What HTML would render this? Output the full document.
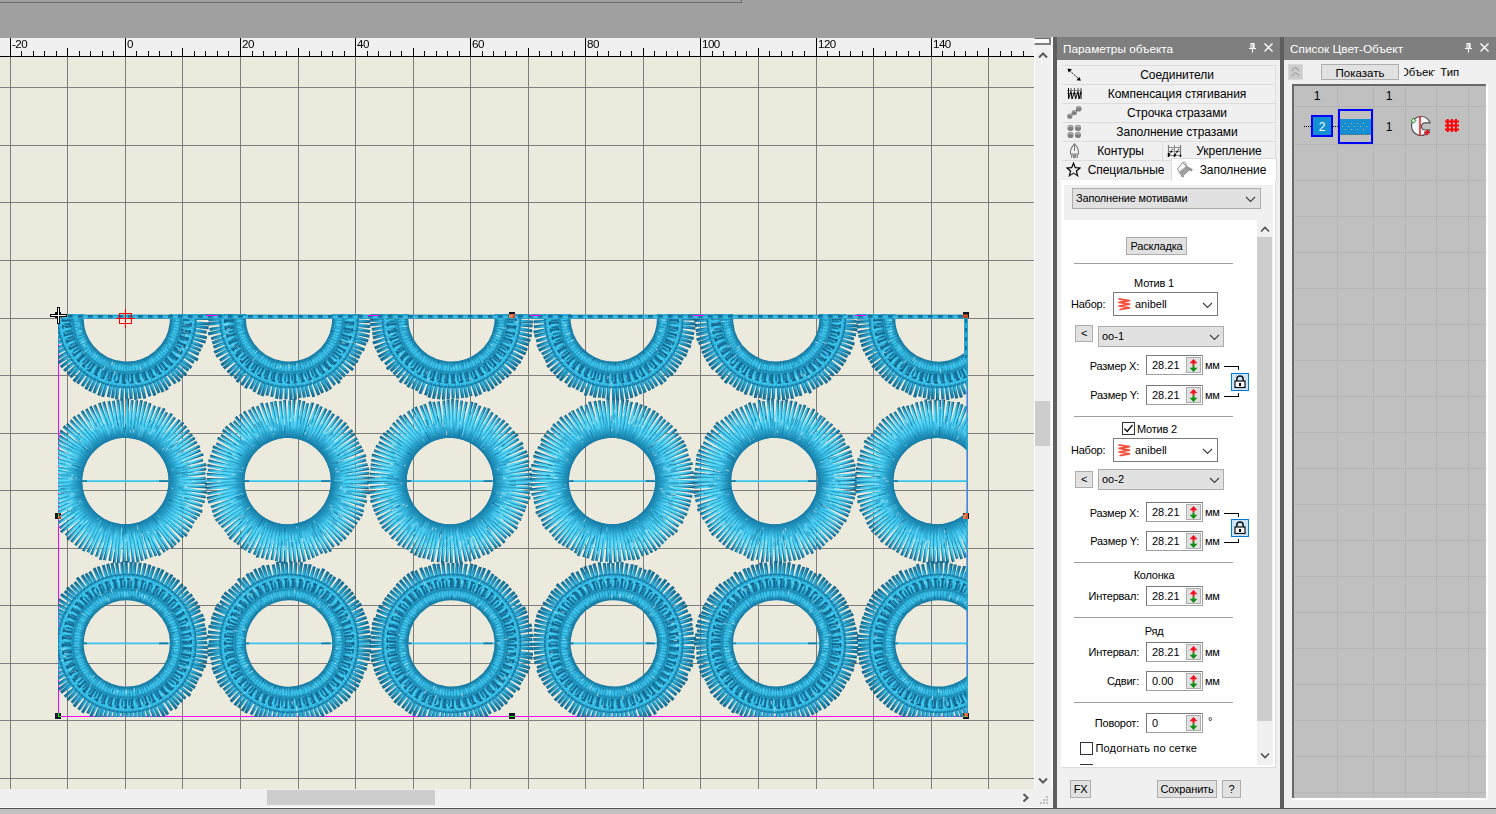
<!DOCTYPE html>
<html lang="ru"><head><meta charset="utf-8"><title>Параметры объекта</title>
<style>
*{box-sizing:border-box;margin:0;padding:0}
html,body{width:1496px;height:814px;overflow:hidden}
body{background:#a0a0a0;font-family:"Liberation Sans",sans-serif;font-size:12px;color:#000;position:relative}
.abs{position:absolute}
.t{position:absolute;white-space:nowrap;line-height:14px}
.btn{position:absolute;background:#e1e1e1;border:1px solid #adadad;text-align:center;white-space:nowrap}

.hdr{position:absolute;top:37px;height:23px;background:#7f7f7f;color:#fff;font-size:11.8px;line-height:25px;white-space:nowrap}
.tab{position:absolute;height:19px;border-top:1px solid #dcdcdc;font-size:12px;letter-spacing:-0.05px;line-height:18px;text-align:center;white-space:nowrap;color:#000}
.s{font-size:11px;letter-spacing:-0.18px}
.lbl{position:absolute;letter-spacing:-0.22px;font-size:11px;line-height:13px;white-space:nowrap;text-align:right}
.spin{position:absolute;left:1146px;width:57px;height:20px;background:#fff;border:1px solid #7a7a7a;border-right-color:#a0a0a0;border-bottom-color:#a0a0a0;font-size:11px;line-height:18px;padding-left:5px}
.spin i{position:absolute;right:1px;top:1px;width:15px;height:16px;background:#e1e1e1;border:1px solid #adadad}
.sep{position:absolute;left:1074px;width:159px;height:1px;background:#a0a0a0}
.cmbw{position:absolute;left:1113px;width:105px;height:24px;background:#fff;border:1px solid #7a7a7a;font-size:11px;line-height:22px}
.cmbg{position:absolute;left:1098px;width:126px;height:21px;background:#e1e1e1;border:1px solid #adadad;font-size:11px;line-height:19px;padding-left:3px}
.cb{position:absolute;width:13px;height:13px;background:#fff;border:1px solid #333}
.lock{position:absolute;left:1231px;width:18px;height:18px;background:#cce4f7;border:1px solid #0078d7}
/*CSS*/
</style></head><body>
<div class="abs" style="left:0;top:0;width:742px;height:3px;border-right:1px solid #6d6d6d;border-bottom:1px solid #6d6d6d;background:#a0a0a0"></div>
<svg id="cv" width="1034" height="751" viewBox="0 38 1034 751" style="position:absolute;left:0;top:38px" shape-rendering="crispEdges">
<rect x="0" y="38" width="1034" height="19" fill="#f0f0f0"/>
<rect x="0" y="57" width="1034" height="732" fill="#ece9dd"/>
<path d="M10.5 57V789M67.5 57V789M125.5 57V789M182.5 57V789M240.5 57V789M298.5 57V789M355.5 57V789M413.5 57V789M470.5 57V789M528.5 57V789M585.5 57V789M643.5 57V789M700.5 57V789M758.5 57V789M816.5 57V789M873.5 57V789M931.5 57V789M988.5 57V789M0 87.5H1034M0 145.5H1034M0 202.5H1034M0 260.5H1034M0 318.5H1034M0 375.5H1034M0 433.5H1034M0 490.5H1034M0 548.5H1034M0 605.5H1034M0 663.5H1034M0 720.5H1034M0 778.5H1034" stroke="#7d7d7d" stroke-width="1" fill="none"/>
<path d="M10.5 38V57M21.5 51V57M33.5 51V57M44.5 51V57M56.5 51V57M67.5 48V57M79.5 51V57M90.5 51V57M102.5 51V57M113.5 51V57M125.5 38V57M136.5 51V57M148.5 51V57M159.5 51V57M171.5 51V57M182.5 48V57M194.5 51V57M205.5 51V57M217.5 51V57M228.5 51V57M240.5 38V57M252.5 51V57M263.5 51V57M275.5 51V57M286.5 51V57M298.5 48V57M309.5 51V57M321.5 51V57M332.5 51V57M344.5 51V57M355.5 38V57M367.5 51V57M378.5 51V57M390.5 51V57M401.5 51V57M413.5 48V57M424.5 51V57M436.5 51V57M447.5 51V57M459.5 51V57M470.5 38V57M482.5 51V57M493.5 51V57M505.5 51V57M516.5 51V57M528.5 48V57M539.5 51V57M551.5 51V57M562.5 51V57M574.5 51V57M585.5 38V57M597.5 51V57M608.5 51V57M620.5 51V57M631.5 51V57M643.5 48V57M654.5 51V57M666.5 51V57M677.5 51V57M689.5 51V57M700.5 38V57M712.5 51V57M723.5 51V57M735.5 51V57M746.5 51V57M758.5 48V57M769.5 51V57M781.5 51V57M792.5 51V57M804.5 51V57M816.5 38V57M827.5 51V57M839.5 51V57M850.5 51V57M862.5 51V57M873.5 48V57M885.5 51V57M896.5 51V57M908.5 51V57M919.5 51V57M931.5 38V57M942.5 51V57M954.5 51V57M965.5 51V57M977.5 51V57M988.5 48V57M1000.5 51V57M1011.5 51V57M1023.5 51V57M0 56.5H1034" stroke="#000" stroke-width="1" fill="none"/>
<g shape-rendering="auto" font-family="'Liberation Sans',sans-serif" font-size="11.6" fill="#000">
<text x="12" y="48.4" letter-spacing="-0.55">-20</text>
<text x="127" y="48.4" letter-spacing="-0.55">0</text>
<text x="242" y="48.4" letter-spacing="-0.55">20</text>
<text x="357" y="48.4" letter-spacing="-0.55">40</text>
<text x="472" y="48.4" letter-spacing="-0.55">60</text>
<text x="587" y="48.4" letter-spacing="-0.55">80</text>
<text x="702" y="48.4" letter-spacing="-0.55">100</text>
<text x="818" y="48.4" letter-spacing="-0.55">120</text>
<text x="933" y="48.4" letter-spacing="-0.55">140</text>
</g>
<g shape-rendering="auto">
<defs>
<clipPath id="dc"><rect x="58" y="314" width="910" height="403"/></clipPath>
<radialGradient id="g1" gradientUnits="userSpaceOnUse" cx="0" cy="0" r="83"><stop offset="0.518" stop-color="#167aa4"/><stop offset="0.566" stop-color="#2092bc"/><stop offset="0.614" stop-color="#2aa6d0"/><stop offset="0.663" stop-color="#36bce6"/><stop offset="0.723" stop-color="#40cdf5"/><stop offset="0.819" stop-color="#42d0f7"/><stop offset="0.904" stop-color="#34b6e0"/><stop offset="0.964" stop-color="#2494bc"/><stop offset="1.000" stop-color="#18769c"/></radialGradient>
<radialGradient id="g1d" gradientUnits="userSpaceOnUse" cx="0" cy="0" r="83"><stop offset="0.675" stop-color="rgba(10,80,115,0)"/><stop offset="0.747" stop-color="rgba(10,80,115,0.4)"/><stop offset="0.892" stop-color="rgba(8,65,100,0.55)"/><stop offset="1.000" stop-color="rgba(5,50,80,0.75)"/></radialGradient>
<radialGradient id="g1l" gradientUnits="userSpaceOnUse" cx="0" cy="0" r="83"><stop offset="0.602" stop-color="rgba(120,235,255,0)"/><stop offset="0.699" stop-color="rgba(120,235,255,0.45)"/><stop offset="0.843" stop-color="rgba(120,235,255,0.5)"/><stop offset="0.940" stop-color="rgba(120,235,255,0)"/></radialGradient>
<radialGradient id="g2o" gradientUnits="userSpaceOnUse" cx="0" cy="0" r="83"><stop offset="0.819" stop-color="#2eaed8"/><stop offset="0.861" stop-color="#32b4de"/><stop offset="0.904" stop-color="#2698c0"/><stop offset="0.952" stop-color="#1a7ea6"/><stop offset="1.000" stop-color="#11648a"/></radialGradient>
<radialGradient id="g2m" gradientUnits="userSpaceOnUse" cx="0" cy="0" r="83"><stop offset="0.657" stop-color="#2090ba"/><stop offset="0.687" stop-color="#34bce8"/><stop offset="0.747" stop-color="#40cef6"/><stop offset="0.795" stop-color="#3ac6f0"/><stop offset="0.837" stop-color="#2498c2"/></radialGradient>
<radialGradient id="g2i" gradientUnits="userSpaceOnUse" cx="0" cy="0" r="83"><stop offset="0.518" stop-color="#15769e"/><stop offset="0.548" stop-color="#2296be"/><stop offset="0.584" stop-color="#3ac6f0"/><stop offset="0.620" stop-color="#38c2ec"/><stop offset="0.647" stop-color="#26a0c8"/></radialGradient>
<g id="m1" fill="none" stroke-linecap="butt"><circle r="51.5" stroke="url(#g1)" stroke-width="16.6"/><path d="M43.2 1.4L59 1.8L72 1.5L81.6 1.2L81.6 -1.3L72 -1.5L59 -1.8L43.2 -1.4ZM43 4.1L58.8 5.5L71.8 6L81.2 6.4L81.3 3.9L72 3.1L59 1.9L43.2 1.3ZM42.7 6.4L58.4 8.6L71.3 9.9L81 10.8L81.3 8.2L71.7 6.9L58.8 5.1L43.1 3.6ZM42.3 8.7L57.8 11.8L70.7 13.7L80.1 15.1L80.6 12.6L71.2 10.8L58.4 8.3L42.8 6ZM41.7 11.4L57 15.4L69.7 18.2L79.6 20.3L80.2 17.8L70.4 15.3L57.8 11.9L42.3 8.7ZM41.1 13.5L56.1 18.4L68.7 21.8L77.4 24.1L78.1 21.6L69.5 18.9L57.1 14.9L41.8 10.8ZM40.2 15.9L54.9 21.6L67.3 25.7L77 28.9L77.8 26.5L68.3 22.9L56.1 18.2L41.1 13.3ZM39.1 18.5L53.4 25.1L65.4 30L73.2 33.2L74.3 30.8L66.6 27.3L54.8 21.8L40.2 15.9ZM37.9 20.9L51.8 28.4L63.5 34L73 38.6L74.2 36.4L64.8 31.3L53.4 25.2L39.1 18.4ZM36.7 22.9L50.1 31.2L61.5 37.4L70.1 42.1L71.4 39.9L63 34.8L51.9 28L38.1 20.5ZM35.4 24.8L48.4 33.7L59.5 40.6L66.6 44.9L68 42.8L61.1 38.1L50.4 30.7L37 22.4ZM33.8 26.9L46.2 36.7L56.8 44.2L63.7 49.1L65.3 47L58.6 41.8L48.4 33.8L35.5 24.7ZM32.3 28.7L44.2 39.1L54.4 47.2L61.3 52.7L63 50.8L56.3 44.9L46.5 36.4L34.1 26.6ZM30.6 30.5L41.9 41.6L51.6 50.2L58.7 56.5L60.4 54.6L53.7 48L44.4 38.9L32.5 28.4ZM28.7 32.4L39.2 44.1L48.4 53.4L55.6 60.7L57.5 58.9L50.5 51.3L41.8 41.6L30.7 30.4ZM26.7 34L36.5 46.4L45.1 56.1L51.6 63.5L53.6 61.9L47.4 54.2L39.3 44L28.8 32.2ZM24.7 35.5L33.8 48.4L41.8 58.6L47.9 66.4L49.9 64.9L44.2 56.9L36.7 46.3L26.9 33.8ZM22.6 36.9L30.9 50.3L38.3 61L43.5 68.3L45.6 66.9L40.8 59.3L33.9 48.3L24.9 35.3ZM20.2 38.2L27.6 52.2L34.3 63.3L39.8 72.5L42 71.2L36.9 61.8L30.8 50.4L22.6 36.8ZM18 39.3L24.7 53.6L30.7 65.1L35.3 74L37.6 72.8L33.4 63.8L27.9 52L20.5 38.1ZM15.9 40.2L21.8 54.8L27.3 66.6L31 74.7L33.4 73.7L30 65.5L25.1 53.4L18.5 39.1ZM13.6 41L18.6 56L23.4 68.1L26.5 76L28.9 75.1L26.2 67.1L22 54.8L16.2 40.1ZM10.9 41.8L15 57.1L19 69.5L21.8 78.3L24.3 77.6L21.9 68.6L18.5 56.1L13.6 41ZM8.4 42.4L11.6 57.9L14.9 70.5L17.2 79.4L19.6 78.8L17.8 69.8L15.1 57.1L11.2 41.8ZM5.9 42.8L8.2 58.5L10.6 71.2L12.6 81.4L15.1 80.9L13.6 70.7L11.7 57.9L8.6 42.3ZM3.9 43L5.4 58.8L7.3 71.6L8.6 80.4L11.1 80L10.3 71.3L9 58.3L6.7 42.7ZM0.9 43.2L1.3 59L2.3 72L3.1 81.4L5.6 81.2L5.3 71.8L4.9 58.8L3.7 43.1ZM-1.6 43.2L-2.1 59L-1.9 72L-1.7 81.2L0.8 81.3L1.1 72L1.5 59L1.2 43.2ZM-3.7 43.1L-4.9 58.8L-5.3 71.8L-5.6 81.6L-3.1 81.8L-2.3 72L-1.3 59L-0.9 43.2ZM-6.5 42.7L-8.8 58.4L-10.1 71.3L-10.9 80.2L-8.4 80.5L-7.1 71.7L-5.3 58.8L-3.8 43.1ZM-8.7 42.3L-11.7 57.8L-13.6 70.7L-14.9 79.7L-12.4 80.1L-10.7 71.2L-8.2 58.5L-5.9 42.8ZM-11.6 41.6L-15.7 56.9L-18.5 69.6L-20.6 79.5L-18.1 80.1L-15.5 70.3L-12.2 57.8L-8.8 42.3ZM-13.5 41L-18.4 56.1L-21.8 68.6L-24.1 77.2L-21.6 78L-18.9 69.5L-14.9 57.1L-10.9 41.8ZM-15.9 40.2L-21.6 54.9L-25.7 67.3L-28.4 75.3L-25.9 76.2L-22.9 68.3L-18.2 56.1L-13.3 41.1ZM-18.5 39L-25.2 53.4L-30.1 65.4L-33.4 73.5L-31.1 74.5L-27.4 66.6L-21.9 54.8L-16 40.2ZM-20.7 38L-28.1 51.9L-33.7 63.6L-37.7 72.1L-35.4 73.3L-31 65L-24.9 53.5L-18.2 39.2ZM-22.7 36.8L-30.9 50.3L-37.1 61.7L-41.9 70.6L-39.6 71.8L-34.5 63.2L-27.7 52.1L-20.2 38.2ZM-24.8 35.4L-33.7 48.5L-40.6 59.5L-45.7 67.9L-43.6 69.3L-38 61.1L-30.7 50.4L-22.4 37ZM-26.8 33.9L-36.5 46.4L-43.9 57.1L-49.3 64.7L-47.2 66.2L-41.5 58.8L-33.6 48.6L-24.5 35.6ZM-28.7 32.3L-39.2 44.2L-47.2 54.4L-52.8 61.4L-50.8 63L-44.9 56.3L-36.4 46.5L-26.6 34.1ZM-30.8 30.3L-42 41.4L-50.8 51.1L-57.7 58.6L-55.8 60.4L-48.6 53.1L-39.4 43.9L-28.8 32.2ZM-32.3 28.7L-44.1 39.3L-53.3 48.4L-60.7 55.8L-58.9 57.6L-51.2 50.6L-41.6 41.9L-30.4 30.7ZM-33.9 26.8L-46.2 36.7L-56 45.3L-62.9 51.5L-61.2 53.4L-54 47.6L-43.9 39.5L-32.1 29ZM-35.6 24.5L-48.5 33.6L-58.8 41.5L-66.6 47.6L-65.1 49.6L-57 44L-46.4 36.5L-33.9 26.8ZM-36.8 22.7L-50.1 31.2L-60.8 38.6L-69.5 44.7L-68.1 46.8L-59.1 41.1L-48.1 34.2L-35.2 25.1ZM-38 20.5L-51.9 28.1L-63 34.9L-70.6 39.6L-69.3 41.8L-61.5 37.5L-50.1 31.2L-36.6 22.9ZM-39.3 18L-53.6 24.7L-65.1 30.8L-73.1 35L-72 37.3L-63.8 33.4L-52 27.9L-38 20.5ZM-40.2 15.9L-54.8 21.9L-66.6 27.3L-74.3 30.9L-73.3 33.2L-65.4 30.1L-53.4 25.2L-39.1 18.5ZM-41 13.7L-56 18.8L-68.1 23.6L-77.1 27.1L-76.2 29.5L-67 26.4L-54.7 22.1L-40 16.3ZM-41.8 11.2L-57 15.4L-69.3 19.4L-78.6 22.5L-77.9 24.9L-68.5 22.3L-55.9 18.8L-40.9 13.9ZM-42.3 8.7L-57.8 11.9L-70.4 15.3L-79.5 17.6L-78.9 20.1L-69.7 18.2L-57 15.4L-41.7 11.4ZM-42.8 5.9L-58.5 8.2L-71.2 10.6L-80.5 12.4L-80.1 15L-70.7 13.6L-57.9 11.7L-42.3 8.6ZM-43.1 3.6L-58.8 5L-71.7 6.8L-82 8.2L-81.7 10.8L-71.3 9.8L-58.4 8.6L-42.8 6.4ZM-43.2 1.3L-59 1.9L-72 3L-80.6 3.7L-80.4 6.3L-71.8 6L-58.8 5.5L-43 4.1ZM-43.2 -1.6L-59 -2.1L-72 -1.9L-82.2 -1.7L-82.3 0.9L-72 1.1L-59 1.5L-43.2 1.2ZM-43.1 -3.8L-58.8 -5.1L-71.8 -5.5L-80.6 -5.7L-80.7 -3.2L-72 -2.5L-59 -1.5L-43.2 -1ZM-42.7 -6.5L-58.4 -8.8L-71.3 -10.1L-81.8 -11.1L-82.1 -8.5L-71.7 -7.1L-58.8 -5.2L-43.1 -3.7ZM-42.3 -8.7L-57.8 -11.8L-70.7 -13.7L-81.1 -15.3L-81.6 -12.8L-71.2 -10.8L-58.4 -8.3L-42.8 -6ZM-41.7 -11.5L-56.9 -15.6L-69.6 -18.4L-79.1 -20.5L-79.7 -18L-70.3 -15.5L-57.8 -12.1L-42.3 -8.8ZM-41 -13.7L-56 -18.6L-68.6 -22L-76.8 -24.3L-77.6 -21.8L-69.4 -19.1L-57.1 -15.1L-41.8 -11ZM-40.2 -15.9L-54.9 -21.6L-67.3 -25.7L-77.3 -29L-78.2 -26.6L-68.3 -22.8L-56.2 -18.2L-41.1 -13.2ZM-39.2 -18.3L-53.5 -24.9L-65.6 -29.7L-74.9 -33.4L-75.9 -31.1L-66.8 -26.9L-55 -21.5L-40.3 -15.7ZM-38 -20.5L-52 -27.9L-63.8 -33.5L-73 -37.8L-74.2 -35.6L-65.1 -30.8L-53.6 -24.7L-39.3 -18ZM-36.7 -22.9L-50.2 -31.1L-61.6 -37.4L-69.5 -41.7L-70.7 -39.5L-63.1 -34.8L-52 -28L-38.1 -20.4ZM-35.4 -24.8L-48.4 -33.7L-59.5 -40.6L-68 -45.9L-69.4 -43.7L-61.1 -38.1L-50.4 -30.7L-37 -22.4ZM-34 -26.7L-46.4 -36.4L-57.1 -43.9L-64.3 -49L-65.9 -46.9L-58.9 -41.5L-48.6 -33.5L-35.6 -24.5ZM-32.2 -28.9L-44 -39.3L-54.2 -47.5L-62.2 -53.9L-63.9 -52L-56.1 -45.2L-46.3 -36.6L-34 -26.7ZM-30.4 -30.7L-41.6 -41.9L-51.3 -50.6L-57.9 -56.6L-59.7 -54.7L-53.3 -48.4L-44.1 -39.2L-32.3 -28.7ZM-28.5 -32.5L-39 -44.3L-48.1 -53.6L-54.2 -59.9L-56.1 -58.2L-50.2 -51.6L-41.6 -41.9L-30.5 -30.6ZM-26.9 -33.8L-36.8 -46.1L-45.5 -55.9L-51.4 -62.5L-53.4 -60.9L-47.7 -53.9L-39.6 -43.8L-29 -32ZM-24.7 -35.5L-33.8 -48.4L-41.8 -58.6L-47.1 -65.3L-49.1 -63.7L-44.2 -56.8L-36.7 -46.2L-26.9 -33.8ZM-22.7 -36.8L-31.1 -50.2L-38.5 -60.8L-43.8 -68.4L-45.9 -66.9L-41 -59.2L-34.1 -48.2L-25 -35.2ZM-20.4 -38.1L-27.9 -52L-34.6 -63.1L-39.1 -70.5L-41.4 -69.2L-37.2 -61.6L-31 -50.2L-22.8 -36.7ZM-18.2 -39.2L-25 -53.5L-31.1 -65L-36 -74.2L-38.3 -73L-33.8 -63.6L-28.2 -51.9L-20.7 -37.9ZM-15.6 -40.3L-21.4 -55L-26.8 -66.9L-30.8 -75.9L-33.2 -74.9L-29.5 -65.7L-24.7 -53.6L-18.2 -39.2ZM-13.4 -41.1L-18.4 -56.1L-23.1 -68.2L-26.6 -77.3L-29 -76.4L-25.9 -67.2L-21.7 -54.9L-16 -40.2ZM-11.2 -41.7L-15.4 -57L-19.5 -69.3L-22.2 -77.3L-24.6 -76.5L-22.4 -68.4L-18.9 -55.9L-13.9 -40.9ZM-8.8 -42.3L-12.2 -57.8L-15.6 -70.3L-18.2 -80.4L-20.7 -79.8L-18.5 -69.6L-15.7 -56.9L-11.6 -41.6ZM-6 -42.8L-8.3 -58.4L-10.9 -71.2L-12.9 -81.6L-15.4 -81.2L-13.8 -70.7L-11.9 -57.8L-8.8 -42.3ZM-3.9 -43L-5.4 -58.8L-7.3 -71.6L-8.7 -81.4L-11.2 -81L-10.3 -71.3L-9 -58.3L-6.7 -42.7ZM-1.1 -43.2L-1.6 -59L-2.7 -72L-3.5 -82L-6.1 -81.8L-5.7 -71.8L-5.2 -58.8L-3.9 -43ZM1.3 -43.2L1.7 -59L1.3 -72L1.1 -82.7L-1.5 -82.7L-1.7 -72L-1.9 -59L-1.5 -43.2ZM3.7 -43.1L4.9 -58.8L5.3 -71.8L5.6 -81.4L3.1 -81.6L2.3 -72L1.3 -59L0.9 -43.2ZM6.5 -42.7L8.8 -58.4L10.1 -71.3L11.1 -81.7L8.5 -82L7.1 -71.7L5.2 -58.8L3.7 -43.1ZM9 -42.3L12.2 -57.8L14.2 -70.6L15.7 -80.5L13.2 -80.9L11.2 -71.1L8.6 -58.4L6.2 -42.8ZM11.5 -41.7L15.6 -56.9L18.3 -69.6L20.5 -79.9L18.1 -80.5L15.4 -70.4L12.1 -57.8L8.7 -42.3ZM13.7 -41L18.5 -56L22 -68.6L24.6 -78.2L22.1 -78.9L19.1 -69.4L15.1 -57.1L11 -41.8ZM16.3 -40L22.1 -54.7L26.4 -67L29.7 -76.8L27.3 -77.7L23.5 -68.1L18.8 -56L13.7 -41ZM18.4 -39.1L25 -53.5L29.8 -65.5L33.7 -75L31.3 -76L27.1 -66.7L21.7 -54.9L15.8 -40.2ZM20.8 -37.9L28.3 -51.8L33.9 -63.5L38.1 -72.2L35.8 -73.4L31.3 -64.9L25.1 -53.4L18.3 -39.2ZM22.9 -36.7L31.1 -50.1L37.4 -61.5L41.8 -69.6L39.6 -70.9L34.8 -63.1L28 -52L20.4 -38.1ZM24.9 -35.3L34 -48.3L40.9 -59.3L46.1 -67.6L43.9 -69L38.4 -60.9L31 -50.3L22.6 -36.8ZM26.7 -34L36.4 -46.4L43.9 -57.1L49.6 -65.1L47.5 -66.6L41.5 -58.9L33.5 -48.6L24.5 -35.6ZM29 -32L39.6 -43.8L47.7 -53.9L54.3 -62L52.4 -63.6L45.5 -55.9L36.8 -46.1L26.9 -33.8ZM30.7 -30.4L41.9 -41.6L50.6 -51.2L56.8 -58L55 -59.8L48.5 -53.3L39.3 -44L28.7 -32.3ZM32.5 -28.5L44.3 -39.1L53.5 -48.2L60.4 -55L58.7 -56.8L51.5 -50.4L41.8 -41.7L30.5 -30.6ZM34 -26.7L46.3 -36.6L56.1 -45.2L63.8 -52L62.2 -53.9L54.2 -47.5L44 -39.3L32.2 -28.9ZM35.4 -24.9L48.2 -34L58.4 -42.1L66.4 -48.3L64.8 -50.4L56.6 -44.5L46.1 -36.9L33.7 -27.1ZM36.7 -22.8L50.1 -31.2L60.8 -38.7L68.7 -44.2L67.3 -46.4L59.1 -41.2L48.1 -34.2L35.2 -25.1ZM38.1 -20.4L52 -28L63.1 -34.7L70.6 -39.3L69.4 -41.5L61.6 -37.3L50.2 -31.1L36.7 -22.8ZM39.3 -18L53.6 -24.7L65.1 -30.8L73.5 -35.3L72.3 -37.5L63.7 -33.5L52 -28L38 -20.5ZM40.2 -15.8L54.9 -21.6L66.7 -27L76.3 -31.4L75.3 -33.7L65.6 -29.8L53.5 -24.9L39.1 -18.3ZM41 -13.6L56 -18.7L68.1 -23.4L75.8 -26.5L75 -28.9L67.1 -26.2L54.8 -22L40.1 -16.2ZM41.8 -11.1L57 -15.3L69.4 -19.4L78.8 -22.5L78 -24.9L68.5 -22.3L56 -18.8L41 -13.8ZM42.3 -8.8L57.8 -12.1L70.4 -15.4L78.8 -17.6L78.2 -20.1L69.6 -18.3L56.9 -15.6L41.7 -11.5ZM42.8 -5.9L58.5 -8.2L71.2 -10.7L80.9 -12.6L80.5 -15.1L70.7 -13.6L57.8 -11.7L42.3 -8.7ZM43.1 -3.7L58.8 -5.1L71.7 -6.9L82 -8.4L81.7 -10.9L71.3 -9.9L58.4 -8.7L42.7 -6.4ZM43.2 -1.2L59 -1.8L72 -2.8L81.8 -3.7L81.7 -6.2L71.8 -5.8L58.8 -5.3L43 -4Z" fill="url(#g1)"/><path d="M56 1L81.7 1M55.8 4.5L81.3 6.2M55.5 7.5L81.1 10.5M55 10.5L80.2 14.9M54.2 14L79.8 20.1M53.4 16.8L77.5 23.8M52.4 19.8L77.2 28.7M51 23.2L73.4 32.9M49.4 26.3L73.3 38.5M47.9 29L70.3 41.9M46.4 31.4L66.8 44.7M44.3 34.3L63.9 48.9M42.4 36.6L61.5 52.6M40.3 38.9L58.9 56.3M37.7 41.4L55.9 60.6M35.2 43.5L51.9 63.4M32.6 45.5L48.2 66.4M30 47.3L43.7 68.2M26.8 49.2L40.1 72.5M24 50.6L35.7 74M21.4 51.8L31.3 74.6M18.3 52.9L26.8 75.9M14.9 54L22.1 78.3M11.7 54.8L17.4 79.4M8.4 55.4L12.9 81.5M5.8 55.7L8.9 80.4M2 56L3.3 81.4M-1.3 56L-1.5 81.3M-4 55.9L-5.3 81.7M-7.7 55.5L-10.7 80.3M-10.4 55L-14.7 79.8M-14.2 54.2L-20.4 79.7M-16.8 53.4L-23.8 77.4M-19.8 52.4L-28.1 75.4M-23.3 50.9L-33.2 73.6M-26.1 49.6L-37.5 72.3M-28.7 48.1L-41.7 70.8M-31.4 46.4L-45.6 68.1M-34 44.5L-49.1 64.9M-36.6 42.4L-52.6 61.6M-39.4 39.8L-57.6 58.9M-41.3 37.8L-60.6 56.1M-43.4 35.4L-62.7 51.7M-45.7 32.4L-66.5 47.8M-47.2 30.2L-69.5 45M-48.9 27.3L-70.5 39.9M-50.6 24.1L-73.1 35.3M-51.8 21.4L-74.2 31.1M-52.9 18.5L-77.1 27.4M-53.9 15.3L-78.6 22.8M-54.7 12L-79.5 17.9M-55.4 8.4L-80.5 12.7M-55.7 5.5L-82.1 8.5M-56 2.5L-80.6 4M-56 -1.3L-82.4 -1.4M-55.9 -4.1L-80.6 -5.5M-55.5 -7.7L-82 -10.8M-55 -10.5L-81.3 -15.1M-54.2 -14.1L-79.3 -20.2M-53.4 -17L-76.9 -24M-52.4 -19.8L-77.6 -28.8M-51.1 -22.9L-75.1 -33.2M-49.7 -25.9L-73.3 -37.7M-48 -28.9L-69.6 -41.5M-46.4 -31.4L-68.3 -45.7M-44.5 -34L-64.5 -48.8M-42.2 -36.8L-62.5 -53.8M-40 -39.2L-58.2 -56.4M-37.5 -41.6L-54.4 -59.7M-35.5 -43.3L-51.7 -62.4M-32.7 -45.5L-47.3 -65.1M-30.1 -47.2L-44.1 -68.3M-27.1 -49L-39.4 -70.4M-24.3 -50.5L-36.3 -74.2M-21 -51.9L-31.1 -75.8M-18.1 -53L-26.9 -77.3M-15.3 -53.9L-22.4 -77.2M-12.3 -54.7L-18.5 -80.5M-8.6 -55.3L-13.2 -81.7M-5.8 -55.7L-9 -81.4M-2.3 -56L-3.8 -82.1M0.9 -56L0.8 -82.9M4 -55.9L5.3 -81.5M7.7 -55.5L10.8 -81.9M10.9 -54.9L15.5 -80.6M14.1 -54.2L20.3 -80.1M16.9 -53.4L24.4 -78.4M20.3 -52.2L29.5 -77.1M23 -51L33.4 -75.2M26.2 -49.5L37.9 -72.5M28.9 -48L41.6 -69.8M31.7 -46.2L45.9 -67.8M34 -44.5L49.4 -65.4M37 -42L54.2 -62.3M39.3 -39.9L56.7 -58.3M41.5 -37.6L60.3 -55.2M43.5 -35.3L63.8 -52.3M45.4 -32.9L66.3 -48.6M47.2 -30.2L68.7 -44.5M49 -27.1L70.5 -39.6M50.5 -24.1L73.4 -35.5M51.8 -21.2L76.3 -31.7M52.9 -18.4L75.7 -26.8M53.9 -15.2L78.8 -22.8M54.7 -12.1L78.7 -17.9M55.4 -8.5L81 -12.9M55.7 -5.5L82.1 -8.7M56 -2.4L81.9 -3.9" stroke="url(#g1d)" stroke-width="1.0"/><path d="M50 -0.6L77.7 -0.6M49.9 2.6L77.4 4.3M49.7 5.2L77.3 8.4M49.4 7.9L76.6 12.6M48.8 11L76.3 17.6M48.1 13.5L74.1 21.2M47.3 16.3L74 25.9M46.1 19.4L70.3 29.9M44.8 22.2L70.4 35.2M43.6 24.6L67.7 38.5M42.2 26.8L64.3 41.2M40.5 29.4L61.7 45.2M38.8 31.5L59.5 48.8M37 33.7L57.1 52.4M34.8 35.9L54.3 56.6M32.6 37.9L50.5 59.3M30.3 39.7L47.1 62.2M28 41.4L42.9 64M25.3 43.2L39.5 68.2M22.8 44.5L35.3 69.7M20.5 45.6L31.2 70.3M17.8 46.7L26.9 71.6M14.8 47.8L22.5 74M11.9 48.6L18.1 75.1M9 49.2L13.8 77.2M6.7 49.6L10 76.2M3.3 49.9L4.7 77.4M0.3 50L0.2 77.3M-2.1 50L-3.5 77.8M-5.4 49.7L-8.6 76.5M-7.8 49.4L-12.4 76.1M-11.2 48.7L-17.9 76.2M-13.5 48.1L-21.1 74M-16.3 47.3L-25.2 72.2M-19.4 46.1L-30.1 70.6M-21.9 44.9L-34.3 69.4M-24.3 43.7L-38.3 68.1M-26.8 42.2L-42 65.6M-29.2 40.6L-45.4 62.6M-31.5 38.8L-48.8 59.5M-34.1 36.6L-53.7 57.1M-35.9 34.8L-56.6 54.5M-37.8 32.7L-58.7 50.4M-39.9 30.2L-62.4 46.8M-41.3 28.2L-65.3 44.1M-42.9 25.7L-66.2 39.2M-44.5 22.8L-68.8 34.9M-45.6 20.5L-69.9 31M-46.7 17.9L-72.8 27.5M-47.7 15.1L-74.3 23.1M-48.5 12.2L-75.2 18.6M-49.2 9L-76.3 13.6M-49.6 6.4L-77.9 9.6M-49.9 3.7L-76.5 5.3M-50 0.4L-78.4 0.2M-50 -2.2L-76.7 -3.6M-49.7 -5.4L-78.2 -8.8M-49.4 -7.9L-77.7 -12.8M-48.7 -11.2L-75.8 -17.7M-48.1 -13.7L-73.5 -21.3M-47.3 -16.3L-74.4 -26M-46.2 -19.1L-72 -30.2M-45 -21.8L-70.4 -34.4M-43.6 -24.5L-67 -38.1M-42.2 -26.8L-65.8 -42.2M-40.6 -29.2L-62.3 -45.1M-38.7 -31.7L-60.5 -50M-36.7 -33.9L-56.4 -52.5M-34.6 -36.1L-52.9 -55.7M-32.8 -37.7L-50.3 -58.3M-30.4 -39.7L-46.2 -60.9M-28.1 -41.3L-43.2 -64M-25.5 -43L-38.8 -66.1M-23 -44.4L-35.9 -69.9M-20.1 -45.8L-31 -71.5M-17.6 -46.8L-27 -73M-15.1 -47.7L-22.8 -72.9M-12.4 -48.4L-19.2 -76.3M-9.2 -49.2L-14.1 -77.5M-6.7 -49.6L-10.1 -77.3M-3.5 -49.9L-5.2 -78M-0.7 -50L-0.8 -78.8M2.1 -50L3.5 -77.6M5.4 -49.7L8.8 -78.1M8.2 -49.3L13.2 -77M11.1 -48.8L17.8 -76.6M13.7 -48.1L21.7 -75M16.8 -47.1L26.6 -73.9M19.2 -46.2L30.4 -72.2M22.1 -44.9L34.7 -69.6M24.5 -43.6L38.2 -67.2M27 -42.1L42.3 -65.3M29.2 -40.6L45.7 -63.1M31.9 -38.5L50.4 -60.3M34 -36.7L52.8 -56.5M36.1 -34.6L56.3 -53.7M37.9 -32.6L59.7 -50.9M39.6 -30.5L62.1 -47.5M41.3 -28.2L64.5 -43.6M43 -25.5L66.3 -39M44.5 -22.9L69.1 -35.2M45.7 -20.3L72 -31.6M46.7 -17.8L71.4 -26.9M47.7 -15L74.5 -23.1M48.5 -12.3L74.5 -18.5M49.2 -9L76.8 -13.8M49.6 -6.4L78 -9.8M49.9 -3.6L77.8 -5.3" stroke="url(#g1l)" stroke-width="1.0"/><path d="M45 1.1L60 1.5M44.8 4.1L59.8 5.4M44.6 6.2L59.4 8.3M44.1 8.8L58.8 11.7M43.4 11.9L57.9 15.8M42.7 14.2L56.9 18.9M41.9 16.4L55.9 21.9M40.7 19.3L54.2 25.7M39.8 21L53.1 28M38.5 23.4L51.3 31.1M36.7 26L48.9 34.7M35.1 28.1L46.8 37.5M33.3 30.2L44.5 40.3M32 31.7L42.6 42.2M29.9 33.6L39.9 44.8M27.9 35.3L37.2 47.1M25.9 36.8L34.5 49.1M23.8 38.2L31.7 50.9M21.1 39.7L28.1 53M18.6 41L24.8 54.6M16.6 41.8L22.1 55.8M14.5 42.6L19.3 56.8M11.7 43.5L15.6 57.9M9.4 44L12.5 58.7M6.7 44.5L9 59.3M3.8 44.8L5.1 59.8M1.6 45L2.2 60M-1.1 45L-1.4 60M-3.6 44.9L-4.9 59.8M-6.1 44.6L-8.2 59.4M-9.5 44L-12.7 58.6M-11.8 43.4L-15.8 57.9M-13.8 42.8L-18.4 57.1M-16.9 41.7L-22.5 55.6M-19.1 40.7L-25.5 54.3M-21.3 39.6L-28.4 52.9M-23.9 38.1L-31.9 50.8M-25.6 37L-34.1 49.4M-27.8 35.4L-37.1 47.2M-29.7 33.8L-39.6 45.1M-31.9 31.8L-42.5 42.3M-33.4 30.1L-44.6 40.1M-35.3 27.9L-47.1 37.1M-36.8 25.9L-49.1 34.6M-38.2 23.7L-51 31.7M-39.5 21.6L-52.6 28.8M-40.6 19.3L-54.2 25.8M-41.7 17L-55.6 22.6M-42.7 14.1L-57 18.8M-43.4 12L-57.8 16.1M-44 9.2L-58.7 12.3M-44.5 7L-59.3 9.3M-44.8 4.3L-59.7 5.7M-45 1.5L-60 2M-45 -0.9L-60 -1.2M-44.8 -3.8L-59.8 -5.1M-44.6 -6.1L-59.4 -8.1M-44.1 -9.1L-58.8 -12.1M-43.5 -11.7L-58 -15.5M-42.7 -14.3L-56.9 -19.1M-42 -16.2L-56 -21.6M-40.6 -19.4L-54.2 -25.8M-39.7 -21.2L-52.9 -28.2M-38.1 -23.9L-50.8 -31.9M-36.8 -25.9L-49.1 -34.5M-35.4 -27.7L-47.3 -37M-33.8 -29.7L-45.1 -39.6M-32.1 -31.5L-42.8 -42M-30.2 -33.4L-40.3 -44.5M-27.8 -35.4L-37.1 -47.1M-25.6 -37L-34.1 -49.3M-23.6 -38.3L-31.5 -51.1M-21.5 -39.5L-28.7 -52.7M-19.1 -40.8L-25.4 -54.3M-16.3 -41.9L-21.7 -55.9M-13.9 -42.8L-18.5 -57.1M-11.8 -43.4L-15.8 -57.9M-9.5 -44L-12.7 -58.6M-6.6 -44.5L-8.9 -59.3M-3.6 -44.9L-4.8 -59.8M-1.7 -45L-2.3 -60M1 -45L1.3 -60M3.8 -44.8L5 -59.8M6.6 -44.5L8.7 -59.4M8.7 -44.2L11.6 -58.9M12 -43.4L16 -57.8M14.1 -42.7L18.8 -57M16.5 -41.9L22 -55.8M18.8 -40.9L25 -54.5M21.5 -39.5L28.7 -52.7M23.6 -38.3L31.5 -51.1M25.8 -36.9L34.4 -49.2M28 -35.2L37.3 -47M30.2 -33.4L40.2 -44.5M31.6 -32L42.1 -42.7M33.8 -29.7L45.1 -39.6M35.2 -28.1L46.9 -37.4M36.8 -26L49 -34.6M38.1 -24L50.8 -32M39.7 -21.2L52.9 -28.2M40.9 -18.8L54.5 -25.1M42 -16.2L56 -21.6M42.7 -14.2L56.9 -19M43.5 -11.4L58.1 -15.1M44 -9.3L58.7 -12.4M44.5 -6.9L59.3 -9.2M44.9 -3.5L59.8 -4.6M45 -1.5L60 -2" stroke="#126a92" stroke-opacity="0.2" stroke-width="1"/><path d="M55 2.2L65.3 2.6M58.4 8.6L63.1 9.3M47.4 22.1L51.3 23.9M52.9 25.3L59.6 28.4M44.1 25.7L54.3 31.7M47.4 30.5L52.8 34M36.8 38.1L40.5 41.9M33.3 47.5L37.8 54.1M21.9 41.4L24.1 45.6M26.5 53.8L28.5 57.9M-1.5 45.4L-1.8 54.7M-6.6 56.6L-7.6 65.6M-17.8 58L-19.4 63.1M-18.2 48.9L-21.6 58.2M-28.5 35L-33.8 41.5M-32.3 36.4L-36.9 41.6M-61.4 6.3L-65.7 6.7M-51.8 2.1L-56.9 2.3M-61.9 -3.7L-65.9 -3.9M-54.5 -8.8L-62.1 -10.1M-52 -28.5L-57.9 -31.8M-50.5 -31.7L-55.9 -35.1M-26.5 -38.9L-31.2 -45.8M-10.3 -46.7L-11.7 -53M-10.8 -56.8L-12.3 -64.8M29 -47.3L32.3 -52.7M29.4 -38.1L36.5 -47.4M32.4 -40.1L36 -44.6M55 -30.1L57.9 -31.6M52.5 -26.3L56.1 -28.1M57.6 -27.4L59.6 -28.3M55.7 -21L61.1 -23.1M50 -14.2L57.8 -16.4" stroke="#0b5278" stroke-opacity="0.55" stroke-width="0.9"/><path d="M56 2.8L60.6 3.1M52.3 6.9L59.7 7.9M57.3 10.2L65 11.6M56.3 12.2L63.9 13.8M58.3 24.3L60.9 25.4M49.6 24.9L58.5 29.3M42.2 23.3L48.1 26.6M38.4 42.5L41.9 46.3M37.8 45.1L40.5 48.4M30 42.4L33.1 46.6M29.2 50.1L33.3 57M18.4 43.7L21.6 51.4M24.8 56.7L26.5 60.4M13.4 50.6L15.1 56.9M6.4 55.3L6.9 59.8M-6.7 59.8L-7.4 65.6M-11.8 52.9L-13.5 60.6M-17.9 52.5L-19.4 56.9M-22.1 52.7L-25.6 60.8M-19.4 41.2L-22.9 48.5M-27.9 44.2L-31.2 49.5M-39.9 30.3L-45.4 34.4M-44.9 31.2L-52.7 36.6M-50.2 29L-57.1 33M-43.5 23.4L-49.6 26.6M-57.1 22L-61.6 23.8M-52.1 13.3L-61.4 15.7M-51.1 10.5L-60.9 12.5M-54.6 8.2L-65.3 9.8M-58.8 -7.8L-65.4 -8.7M-50.4 -9.8L-57.8 -11.2M-42.6 -16L-53.2 -20M-53.9 -23.1L-58.1 -24.9M-55.5 -29.1L-58.5 -30.6M-43.6 -25.8L-48.5 -28.7M-42.6 -28.7L-50.2 -33.8M-50 -35L-54 -37.9M-41.8 -38.9L-48.3 -44.9M-37.7 -39.7L-41.7 -43.9M-40.4 -40.5L-45.8 -45.9M-39.2 -48.2L-41.6 -51.2M-31 -36.9L-37.6 -44.8M-29.3 -37.9L-34.8 -45M-27.1 -48.2L-29.4 -52.2M-22.5 -58.4L-23.7 -61.6M-19.2 -55.5L-21.6 -62.4M-15.5 -49.7L-17.9 -57.2M-17.6 -57.6L-18.9 -61.8M-12.2 -52.8L-14.6 -63.1M-8.8 -62.9L-9.2 -65.4M-2.8 -48L-3.1 -53.7M1.1 -51.4L1.3 -60.7M1.3 -63.3L1.3 -66M3.9 -48.3L4.5 -55.2M6.6 -61.6L7 -65.6M12.4 -60.5L13.2 -64.7M8.6 -51.5L10.5 -63.2M11.1 -44.2L13.2 -52.5M13.7 -62.2L14.1 -64.5M21.8 -54.4L24.5 -61.3M31 -52.3L33.7 -56.8M34.1 -52.1L36.1 -55.2M33.7 -46L39 -53.3M39.3 -40.6L43.2 -44.6M37.9 -34L42.3 -38M38.5 -35.4L46.1 -42.4M45.6 -37.2L50.2 -40.9M45.8 -39.7L49.9 -43.2M46.6 -34.8L52.9 -39.5M39.3 -22.3L48.1 -27.3M47.9 -9.1L56.3 -10.7M58.3 -9.9L65.1 -11M54.8 -7.4L65.4 -8.9M55.1 -3.5L61 -3.8" stroke="#0e5e86" stroke-opacity="0.3" stroke-width="0.9"/><path d="M58.1 -1.1L66 -1.3M54 12.6L60.6 14.2M52.7 17.7L60.8 20.4M59.1 20.4L62.4 21.5M52.9 33.4L55.8 35.2M47.1 40L50.3 42.7M44.9 40.3L49.1 44.1M31.5 42.8L36.6 49.7M16.3 57.8L17.4 61.7M1.6 51.7L1.8 58.3M3.8 46.3L4.1 50.9M0.2 54.8L0.2 61.9M-25.5 45.5L-31.1 55.6M-31.6 42L-36.1 48M-32.4 34.8L-39.4 42.4M-31.6 33.4L-35.4 37.4M-42.8 15.2L-49.3 17.5M-59.7 17.7L-63.3 18.8M-54.3 7.2L-60.5 8.1M-57.5 -2.2L-66 -2.5M-60.4 -5.9L-65.7 -6.5M-57.1 -14.4L-64 -16.1M-58.5 -16.8L-63.4 -18.2M-56.7 -16L-63.5 -17.9M-47.6 -21.3L-53 -23.8M-29.8 -41L-36.7 -50.5M-28.7 -47.9L-31.7 -53M-24.2 -54.8L-25.9 -58.7M-22.1 -47.8L-26.5 -57.3M-3.3 -48.4L-4.1 -59.7M18.7 -58.7L20 -62.9M15.7 -45.5L19.4 -56.1M17.8 -47.4L19.5 -52.1M26.1 -52.4L29.4 -58.9M38.2 -26.7L47.8 -33.5M44.9 -28.7L48.6 -31.1M39.5 -24.7L47.8 -29.8M47.7 -20.4L55.9 -23.8M60.3 -13.8L64.3 -14.7M59.1 -14.8L64 -16M58.6 -4.8L64.7 -5.3" stroke="#8ceaff" stroke-opacity="0.5" stroke-width="0.9"/><path d="M63.8 1.3L66 1.3M57.6 8.2L65 9.2M47 12.8L56.1 15.3M56.7 17.9L62.9 19.9M46.8 34.3L53.2 39M41.4 32.6L50.8 40M47.7 40.8L50.1 42.9M37.6 33.7L45.7 40.9M34.2 41.9L38 46.6M30.8 45.7L34.3 50.9M26.2 44L29.3 49.1M18.7 48.7L22.2 57.7M18.5 53.4L21.2 60.9M14 50.7L16.3 58.9M15.6 61.4L16.2 64M9.4 59.5L10.3 65.2M11.1 55.3L12.7 63.2M6.9 54.4L7.7 60.7M-0 63L-0 66M-2.5 58.3L-2.9 65.9M-7.1 47.8L-8.1 54.7M-11.7 58.7L-12.9 64.7M-14.7 59.5L-15.8 64.1M-13.1 47.1L-16 57.7M-20.3 43.7L-23.5 50.4M-25.6 48.2L-28.4 53.5M-26.6 46.7L-31.2 54.8M-28.1 40.3L-32 45.8M-36 45.9L-38.6 49.2M-36.9 33.3L-43.2 39M-46 41.3L-49.1 44M-40 35.3L-47.9 42.3M-34.8 30.3L-42.7 37.2M-43.7 32.4L-51.2 38M-37.9 24.5L-46.7 30.2M-44.6 26.2L-49.1 28.9M-51.8 26.4L-58.8 29.9M-46.9 20.5L-52.2 22.8M-46.9 21.7L-54.4 25.2M-47.2 13.6L-57 16.4M-49.9 13.3L-58.5 15.6M-56.2 4.1L-63 4.6M-63.1 -1.5L-66 -1.6M-59.1 -0.8L-64.8 -0.9M-44.6 -9.6L-54.6 -11.7M-50.5 -18.4L-57.2 -20.8M-41 -21.8L-46.7 -24.8M-42 -32L-46 -35.1M-34.5 -29.5L-42 -35.9M-41.2 -35.4L-47.5 -40.8M-39 -35.3L-44.6 -40.4M-25.7 -39.7L-28.4 -43.9M-26.9 -54.2L-29.4 -59.1M-22.7 -47.4L-27.8 -57.9M-11.1 -60.4L-11.9 -64.9M-4.7 -45.6L-5.7 -54.6M3.1 -52L3.5 -58.3M6.2 -58.9L6.9 -65.6M17.1 -51.7L20.1 -60.9M23.4 -54.7L25.2 -58.7M21.3 -43.4L25.1 -51.2M26.9 -39.2L30.8 -44.8M28.3 -35.7L32.4 -40.8M42.1 -44.3L45.4 -47.9M50.2 -20.7L55.9 -23M45.2 -15.2L56 -18.8M47.7 -14.9L54.2 -16.9M62.3 -6.8L65.6 -7.2" stroke="#7fe0fa" stroke-opacity="0.28" stroke-width="0.9"/><path d="M59.8 1.1L65.3 1.2M56.5 4.3L62.2 4.7M64.5 9.9L67.1 10.3M69.5 18.4L71.9 19.1M56.8 19.6L59.6 20.6M66.2 26L69 27.1M57 26.7L63.1 29.6M58.8 35.6L64.7 39.2M56.5 40.2L60.8 43.2M51.9 41.8L54.2 43.6M42.1 41L44.7 43.5M45.5 51.5L50 56.6M31.1 56.5L33.4 60.6M26.6 65.2L28.5 69.8M18.4 67.8L19.7 72.8M9.9 67.3L10.6 71.5M-1.2 71.6L-1.3 74.2M-5.5 66L-6 72.3M-20 61.1L-21.6 66M-19.6 51.1L-21.7 56.4M-41.6 58.4L-43.7 61.5M-35.6 45.4L-37.4 47.6M-45.5 52.3L-47 54M-50.7 45.9L-53.3 48.3M-51.6 40.9L-55.3 43.8M-56.5 34.8L-60.2 37M-62.6 25.7L-67.9 27.8M-53.9 7.3L-58 7.9M-57.9 5.3L-62 5.6M-66.4 -6.4L-72.5 -6.9M-69.1 -10.4L-72.4 -10.9M-57.9 -12.5L-61.9 -13.4M-53.6 -17.2L-57.1 -18.4M-48.1 -22.9L-51.1 -24.3M-39.7 -34.7L-43 -37.6M-36.9 -36.8L-38.3 -38.2M-38.2 -43.6L-42.6 -48.6M-32.1 -46.7L-35 -50.8M-27.5 -57.2L-28.8 -59.9M-26.1 -65.9L-28 -70.8M-13.5 -64.1L-14.4 -68.8M-10.1 -67.7L-10.6 -70.9M-1 -65.7L-1.1 -69.3M8.5 -61.2L9.5 -68.2M11 -57.2L11.4 -59.4M15.8 -58.7L16.5 -61.3M19.6 -57.5L21.1 -61.7M33 -42.5L36.8 -47.5M46.8 -52.3L49.2 -55M50 -50.2L53.8 -54.1M48.1 -37.5L51.3 -40M64.3 -21.2L68.3 -22.5M67.1 -17.8L73.2 -19.4M55.4 -11.6L59 -12.4M57.2 -5.3L61.4 -5.7" stroke="#e4f2ee" stroke-opacity="0.75" stroke-width="0.8"/><path d="M50.2 1L54 1.1M56.6 11.7L59.4 12.3M43.1 20.5L44.5 21.2M42.7 41.7L43.9 43M31.5 34.4L32.6 35.6M34.1 48.1L35.2 49.7M-8.3 56.8L-8.7 59.4M-13.6 53.6L-14 55.1M-18.9 42L-20.5 45.6M-48.4 22L-51.1 23.2M-44.4 12.2L-45.9 12.7M-46.7 -12.3L-49.1 -12.9M-56.6 -19.1L-58.5 -19.8M-35.8 -32.8L-36.9 -33.8M-28.4 -52.1L-30.3 -55.6M-9.6 -48.6L-10.1 -51.4M-9.2 -57.6L-9.6 -60.4M5.4 -59.6L5.6 -62.4M8.1 -59.3L8.7 -63.2M23.8 -49.2L24.9 -51.4M26.8 -49.7L27.8 -51.5M31.2 -49.9L32.5 -52M34.3 -34.8L35.7 -36.2M36.6 -32.7L39.2 -35.2M47.8 -22.1L50.3 -23.3M52.6 -20.9L55.1 -21.8M48.1 -1.5L51.5 -1.6" stroke="#e4f2ee" stroke-opacity="0.75" stroke-width="0.8"/></g>
<g id="m2" fill="none" stroke-linecap="butt"><path d="M68.5 1.9L75 1.8L81.9 1.6L81.9 -1.3L75 -1.5L68.5 -1.6ZM68.3 6L74.8 6.3L82.1 6.6L82.2 3.7L75 3L68.5 2.5ZM67.8 9.9L74.3 10.6L81.5 11.3L81.9 8.4L74.7 7.3L68.2 6.4ZM67.2 13.2L73.7 14.2L79.9 15L80.3 12.2L74.2 10.9L67.8 9.7ZM66.1 17.9L72.5 19.4L79 20.7L79.7 17.9L73.3 16.1L67 14.5ZM65 21.7L71.2 23.5L76.5 24.9L77.4 22.1L72.2 20.3L66 18.3ZM63.8 25L69.9 27.2L75.4 28.9L76.4 26.2L71.1 24.1L65 21.8ZM62.2 28.8L68.2 31.3L74.2 33.7L75.4 31L69.5 28.2L63.6 25.6ZM60.6 31.9L66.5 34.7L71.7 37L73 34.4L68 31.7L62.2 28.8ZM58.6 35.6L64.2 38.7L70.6 42.2L72.1 39.6L65.9 35.9L60.3 32.5ZM56.1 39.3L61.6 42.8L66.3 45.7L67.9 43.3L63.4 40.1L58.1 36.4ZM53.7 42.5L59 46.4L63.5 49.5L65.2 47.2L61 43.7L55.8 39.7ZM51.3 45.5L56.3 49.6L60.6 52.9L62.5 50.7L58.4 47L53.5 42.8ZM49 47.9L53.8 52.3L59.2 57L61.1 54.9L56 49.9L51.3 45.4ZM45.9 50.8L50.5 55.5L54.6 59.5L56.7 57.5L52.9 53.2L48.5 48.4ZM42.3 53.9L46.5 58.8L51.3 64.2L53.5 62.4L49.1 56.7L45 51.7ZM39.7 55.9L43.6 61L48.2 66.8L50.5 65L46.3 59L42.5 53.8ZM36.1 58.2L39.8 63.6L43.7 69.1L46.1 67.5L42.6 61.8L39.1 56.3ZM33 60.1L36.3 65.6L40.2 71.8L42.7 70.4L39.2 64L36 58.3ZM29 62.1L32 67.8L35.5 74.3L38.1 73.1L35 66.4L32.1 60.5ZM25.2 63.7L27.8 69.7L30.3 75L33 73.9L30.8 68.4L28.4 62.4ZM21.9 64.9L24.2 71L26.3 76.2L29.1 75.2L27.3 69.9L25.2 63.7ZM18.3 66L20.3 72.2L22 77.3L24.8 76.4L23.4 71.3L21.6 65ZM14.3 67L15.9 73.3L17.6 79.6L20.4 79L19.1 72.5L17.7 66.2ZM10.6 67.7L11.9 74.1L13.3 80.6L16.2 80.1L15.2 73.5L14.1 67.1ZM6.4 68.2L7.2 74.7L8.1 80.5L11 80.2L10.5 74.3L9.8 67.8ZM1.9 68.5L2.4 75L2.9 81.2L5.8 81.1L5.7 74.8L5.4 68.3ZM-1.6 68.5L-1.5 75L-1.2 81.3L1.7 81.3L1.8 75L1.9 68.5ZM-5.9 68.3L-6.2 74.8L-6.3 80.1L-3.5 80.3L-2.9 75L-2.4 68.5ZM-10.1 67.8L-10.8 74.2L-11.3 79.5L-8.4 79.8L-7.6 74.6L-6.7 68.2ZM-13.9 67.1L-14.9 73.5L-16 80.5L-13.1 81.1L-11.7 74.1L-10.4 67.7ZM-17.1 66.4L-18.4 72.7L-19.8 79.6L-17 80.2L-15.2 73.5L-13.6 67.2ZM-21.2 65.2L-23 71.4L-24.6 77.7L-21.8 78.5L-19.8 72.4L-17.8 66.2ZM-24.6 63.9L-26.7 70.1L-28.3 75.2L-25.6 76.1L-23.6 71.2L-21.3 65.1ZM-28.5 62.3L-30.9 68.4L-33.6 75.2L-30.9 76.3L-27.9 69.6L-25.2 63.7ZM-32 60.6L-34.9 66.4L-37.7 72.7L-35.1 74L-31.9 67.9L-28.9 62.1ZM-36.1 58.2L-39.3 63.9L-42.8 70.3L-40.3 71.8L-36.5 65.6L-33.1 60ZM-39 56.4L-42.5 61.8L-45.6 67L-43.1 68.6L-39.7 63.7L-36.1 58.3ZM-42.3 53.9L-46.1 59.2L-50.1 64.8L-47.8 66.6L-43.5 61.1L-39.5 56ZM-45.1 51.6L-49.2 56.7L-53.4 62.1L-51.2 63.9L-46.6 58.8L-42.4 53.8ZM-48.5 48.4L-52.9 53.2L-57.7 58.5L-55.6 60.5L-50.5 55.5L-45.9 50.8ZM-50.7 46.1L-55.4 50.6L-60.5 55.8L-58.5 57.9L-53.1 53L-48.3 48.6ZM-53.4 43L-58.2 47.3L-62.7 51.3L-60.8 53.5L-56.1 49.8L-51.1 45.7ZM-56.1 39.4L-61.2 43.4L-66.9 47.9L-65.2 50.2L-59.2 46L-54 42.2ZM-58.1 36.3L-63.5 40L-69.4 44.2L-67.8 46.6L-61.7 42.7L-56.2 39.2ZM-60.2 32.7L-65.8 36L-70.8 39.1L-69.4 41.7L-64.2 38.9L-58.5 35.7ZM-61.9 29.3L-67.7 32.4L-72.6 35.1L-71.3 37.7L-66.2 35.3L-60.3 32.5ZM-63.4 25.9L-69.4 28.6L-74.3 31L-73.2 33.7L-68 31.6L-62 29.1ZM-65 21.6L-71.1 23.9L-78 26.6L-77 29.4L-70 27L-63.8 24.9ZM-66 18.3L-72.2 20.3L-77.2 22L-76.4 24.8L-71.3 23.4L-65 21.6ZM-67.2 13.6L-73.5 15.2L-79.7 16.8L-79 19.6L-72.7 18.4L-66.4 17ZM-67.7 10.3L-74.1 11.5L-79.7 12.7L-79.2 15.6L-73.6 14.7L-67.1 13.7ZM-68.2 6.1L-74.7 7L-81.7 8L-81.3 10.9L-74.3 10.2L-67.8 9.6ZM-68.5 2.3L-75 2.8L-81.1 3.3L-80.9 6.2L-74.8 6.1L-68.3 5.8ZM-68.5 -1.3L-75 -1.2L-82.3 -0.9L-82.2 2L-75 2.1L-68.5 2.2ZM-68.3 -5.3L-74.8 -5.5L-81.1 -5.6L-81.3 -2.7L-75 -2.2L-68.5 -1.8ZM-67.8 -10L-74.3 -10.7L-79.7 -11.2L-80.1 -8.3L-74.7 -7.4L-68.2 -6.5ZM-67.1 -13.8L-73.5 -14.9L-80.8 -16L-81.3 -13.1L-74.1 -11.6L-67.7 -10.4ZM-66.2 -17.6L-72.6 -19L-79.4 -20.5L-80.1 -17.6L-73.3 -15.8L-67 -14.2ZM-65.2 -21L-71.5 -22.7L-77.5 -24.2L-78.3 -21.5L-72.4 -19.5L-66.2 -17.6ZM-63.9 -24.8L-70 -26.9L-76.8 -29.1L-77.8 -26.3L-71.2 -23.8L-65.1 -21.5ZM-62.3 -28.6L-68.3 -31L-74.1 -33.3L-75.2 -30.6L-69.6 -28L-63.7 -25.3ZM-60.2 -32.7L-66 -35.6L-72.5 -38.7L-73.8 -36.1L-67.5 -32.7L-61.8 -29.6ZM-58.2 -36.2L-63.9 -39.4L-69.3 -42.3L-70.8 -39.8L-65.5 -36.5L-60 -33.1ZM-56.3 -39.1L-61.8 -42.6L-67.6 -46.2L-69.2 -43.7L-63.6 -39.8L-58.2 -36.2ZM-53.9 -42.3L-59.2 -46.1L-64 -49.4L-65.7 -47.1L-61.2 -43.4L-56 -39.5ZM-51.4 -45.3L-56.5 -49.4L-60.8 -52.8L-62.7 -50.6L-58.6 -46.9L-53.7 -42.6ZM-48.7 -48.2L-53.5 -52.6L-59 -57.5L-61 -55.4L-55.8 -50.2L-51.1 -45.6ZM-45.4 -51.3L-49.9 -56L-54.6 -60.7L-56.7 -58.7L-52.3 -53.8L-48 -48.9ZM-42.7 -53.6L-46.9 -58.5L-50.9 -62.9L-53.2 -61.1L-49.5 -56.4L-45.4 -51.3ZM-39.8 -55.8L-43.8 -60.9L-47.5 -65.4L-49.8 -63.7L-46.5 -58.9L-42.6 -53.7ZM-35.9 -58.3L-39.6 -63.7L-43.7 -69.6L-46.1 -68L-42.3 -61.9L-38.9 -56.4ZM-32.9 -60.1L-36.2 -65.7L-39.9 -71.6L-42.4 -70.2L-39.1 -64.1L-35.9 -58.4ZM-28.9 -62.1L-31.9 -67.9L-35.1 -73.8L-37.7 -72.6L-34.9 -66.4L-32.1 -60.6ZM-25.4 -63.6L-28 -69.6L-30.9 -75.8L-33.6 -74.7L-31.1 -68.3L-28.6 -62.3ZM-21.9 -64.9L-24.2 -71L-26.8 -77.3L-29.5 -76.3L-27.3 -69.9L-25.2 -63.7ZM-18.2 -66.1L-20.2 -72.3L-22.2 -78.2L-24.9 -77.4L-23.3 -71.3L-21.5 -65.1ZM-13.8 -67.1L-15.4 -73.4L-17.1 -79.9L-20 -79.3L-18.6 -72.7L-17.2 -66.3ZM-10.4 -67.7L-11.6 -74.1L-13.1 -81.3L-16 -80.8L-14.9 -73.5L-13.8 -67.1ZM-6.1 -68.3L-6.9 -74.7L-7.9 -81.1L-10.7 -80.8L-10.2 -74.3L-9.5 -67.9ZM-2.7 -68.5L-3.2 -74.9L-3.8 -81.3L-6.7 -81.2L-6.5 -74.7L-6.2 -68.2ZM1.5 -68.5L1.4 -75L1.2 -81.7L-1.7 -81.7L-1.9 -75L-2 -68.5ZM5.7 -68.3L6 -74.8L6.2 -81.8L3.3 -82L2.7 -75L2.2 -68.5ZM9.8 -67.8L10.5 -74.3L11.1 -81.2L8.2 -81.6L7.2 -74.7L6.4 -68.2ZM13.5 -67.2L14.5 -73.6L15.4 -80.2L12.6 -80.7L11.2 -74.2L10 -67.8ZM17.7 -66.2L19.1 -72.5L20.6 -79.4L17.8 -80.1L15.9 -73.3L14.3 -67ZM21.2 -65.2L22.9 -71.4L24.8 -78.3L22 -79.1L19.8 -72.4L17.8 -66.2ZM25.4 -63.6L27.6 -69.8L29.7 -76.2L27 -77.2L24.5 -70.9L22.1 -64.9ZM29.2 -62L31.7 -68L34.4 -74.8L31.8 -76L28.7 -69.3L25.9 -63.4ZM32.3 -60.4L35.2 -66.3L37.8 -72.1L35.2 -73.4L32.2 -67.8L29.2 -62ZM35.5 -58.6L38.6 -64.3L42 -70.6L39.4 -72L35.8 -65.9L32.5 -60.4ZM39.4 -56L43 -61.5L46.3 -66.8L43.9 -68.4L40.2 -63.3L36.5 -58ZM42.5 -53.8L46.3 -59.1L50.2 -64.6L47.9 -66.4L43.6 -61L39.7 -55.9ZM45.5 -51.2L49.7 -56.2L53.1 -60.6L50.9 -62.5L47.1 -58.4L42.9 -53.5ZM48.5 -48.4L52.9 -53.2L57.2 -58.1L55.1 -60.1L50.5 -55.5L45.9 -50.8ZM51.1 -45.6L55.8 -50.1L60.1 -54.5L58.2 -56.6L53.5 -52.5L48.7 -48.2ZM53.7 -42.6L58.6 -46.8L63.8 -51.4L61.9 -53.7L56.5 -49.4L51.4 -45.3ZM56.1 -39.4L61.2 -43.3L66.6 -47.6L64.9 -49.9L59.3 -46L54 -42.2ZM58 -36.6L63.3 -40.3L67.8 -43.5L66.2 -45.9L61.5 -43L56 -39.5ZM60.2 -32.8L65.7 -36.1L71.4 -39.6L70 -42.1L64.1 -39L58.4 -35.8ZM61.9 -29.4L67.6 -32.5L73.6 -35.7L72.2 -38.3L66.1 -35.4L60.3 -32.5ZM63.6 -25.4L69.6 -28.1L74.4 -30.3L73.2 -33L68.3 -31.1L62.3 -28.6ZM65 -21.8L71 -24.1L76.3 -26.3L75.3 -29L69.9 -27.2L63.8 -25.1ZM66 -18.4L72.2 -20.4L77.4 -22.2L76.5 -25L71.2 -23.5L65 -21.7ZM67 -14.3L73.3 -15.9L78.7 -17.4L78 -20.2L72.5 -19.1L66.2 -17.7ZM67.7 -10.5L74.1 -11.7L79.3 -12.9L78.7 -15.7L73.5 -15L67.1 -13.9ZM68.2 -6.2L74.7 -7.1L80.7 -8L80.3 -10.9L74.3 -10.4L67.8 -9.7ZM68.5 -2.1L75 -2.6L81.5 -3.2L81.3 -6.1L74.8 -5.9L68.3 -5.6Z" fill="url(#g2o)"/><path d="M70 1.2L82 1.2M69.8 5.4L82.2 6.2M69.4 9.4L81.7 10.9M68.8 12.7L80 14.6M67.8 17.6L79.2 20.4M66.6 21.5L76.7 24.5M65.4 24.9L75.6 28.6M63.8 28.7L74.5 33.3M62.3 31.9L71.9 36.7M60.2 35.7L71 41.9M57.8 39.6L66.6 45.4M55.3 42.9L63.8 49.2M52.9 45.9L60.9 52.7M50.5 48.4L59.5 56.8M47.5 51.4L54.9 59.2M43.8 54.6L51.7 64.1M41.1 56.7L48.6 66.7M37.6 59.1L44 69M34.3 61L40.6 71.8M30.3 63.1L35.9 74.3M26.4 64.8L30.7 74.9M23.1 66.1L26.7 76M19.4 67.3L22.4 77.2M15.3 68.3L18 79.6M11.6 69L13.7 80.7M7.2 69.6L8.5 80.5M2.7 70L3.3 81.3M-0.9 70L-0.8 81.4M-5.3 69.8L-5.9 80.1M-9.6 69.3L-10.9 79.5M-13.4 68.7L-15.6 80.7M-16.7 68L-19.4 79.8M-21 66.8L-24.3 77.9M-24.5 65.6L-27.9 75.3M-28.4 64L-33.3 75.5M-32.1 62.2L-37.4 73M-36.3 59.9L-42.6 70.6M-39.2 58L-45.3 67.2M-42.7 55.5L-49.9 65.2M-45.5 53.2L-53.2 62.4M-49 50L-57.5 58.9M-51.3 47.6L-60.3 56.2M-54 44.5L-62.4 51.6M-56.8 40.9L-66.8 48.3M-59 37.7L-69.3 44.6M-61.2 34.1L-70.7 39.5M-62.9 30.6L-72.4 35.4M-64.5 27.1L-74.2 31.4M-66.2 22.8L-78 27.1M-67.3 19.4L-77.1 22.4M-68.5 14.7L-79.6 17.2M-69.1 11.2L-79.7 13.1M-69.7 7L-81.8 8.4M-69.9 3.1L-81.1 3.7M-70 -0.6L-82.4 -0.5M-69.9 -4.7L-81.2 -5.2M-69.4 -9.5L-79.8 -10.8M-68.7 -13.4L-81 -15.6M-67.8 -17.3L-79.6 -20.1M-66.9 -20.7L-77.7 -23.9M-65.5 -24.6L-77.1 -28.7M-63.9 -28.5L-74.3 -32.9M-61.9 -32.8L-72.8 -38.4M-59.9 -36.3L-69.6 -42M-57.9 -39.3L-67.9 -45.9M-55.5 -42.6L-64.3 -49.1M-53 -45.7L-61.1 -52.5M-50.3 -48.7L-59.4 -57.3M-46.9 -51.9L-54.9 -60.5M-44.2 -54.3L-51.3 -62.7M-41.3 -56.5L-47.8 -65.2M-37.4 -59.2L-44.1 -69.5M-34.2 -61.1L-40.3 -71.5M-30.2 -63.1L-35.5 -73.8M-26.6 -64.8L-31.3 -75.8M-23.1 -66.1L-27.2 -77.3M-19.3 -67.3L-22.6 -78.2M-14.9 -68.4L-17.6 -80M-11.3 -69.1L-13.5 -81.4M-6.9 -69.7L-8.3 -81.2M-3.5 -69.9L-4.2 -81.4M0.8 -70L0.8 -81.8M5.1 -69.8L5.8 -82M9.3 -69.4L10.7 -81.4M13 -68.8L15.1 -80.4M17.4 -67.8L20.2 -79.7M20.9 -66.8L24.4 -78.5M25.3 -65.3L29.4 -76.4M29.1 -63.7L34.1 -75.1M32.4 -62.1L37.5 -72.3M35.6 -60.3L41.7 -70.9M39.7 -57.7L46 -67.1M42.8 -55.4L49.9 -65M46 -52.8L52.8 -60.9M49 -50L57 -58.4M51.7 -47.2L59.9 -54.8M54.4 -44.1L63.6 -51.8M56.9 -40.9L66.4 -48M58.8 -38L67.6 -43.9M61.1 -34.1L71.3 -40M62.9 -30.7L73.5 -36.1M64.7 -26.6L74.2 -30.7M66.1 -23L76.2 -26.7M67.2 -19.5L77.3 -22.6M68.3 -15.3L78.7 -17.8M69.1 -11.4L79.2 -13.2M69.6 -7.1L80.7 -8.4M69.9 -2.9L81.5 -3.6" stroke="#0c5478" stroke-opacity="0.5" stroke-width="1.0"/><circle r="61.5" stroke="url(#g2m)" stroke-width="16"/><path d="M55 1.6L69.5 2M54.8 4.4L69.3 5.6M54.5 7.4L68.9 9.4M53.8 11.6L68 14.6M53.1 14.3L67.1 18.1M52.4 16.8L66.2 21.3M51 20.5L64.5 25.9M49.7 23.5L62.9 29.7M48.5 25.8L61.3 32.7M46.8 28.9L59.1 36.5M45 31.6L56.9 40M43.2 34L54.6 43M41.4 36.2L52.3 45.8M38.8 39L49 49.3M36.6 41L46.3 51.8M34.3 43L43.4 54.3M31.7 44.9L40.1 56.8M29.2 46.6L36.8 58.9M25.7 48.6L32.5 61.4M23.4 49.8L29.5 62.9M20.8 50.9L26.3 64.3M16.9 52.3L21.3 66.1M14.1 53.2L17.9 67.2M11 53.9L13.9 68.1M8.3 54.4L10.5 68.7M5.2 54.7L6.6 69.2M2.1 55L2.7 69.4M-1.6 55L-2 69.5M-4.7 54.8L-5.9 69.2M-8.1 54.4L-10.3 68.7M-11.2 53.8L-14.2 68M-14.4 53.1L-18.1 67.1M-16.8 52.4L-21.3 66.2M-20.4 51.1L-25.8 64.5M-23 50L-29.1 63.1M-26.6 48.1L-33.6 60.8M-29.1 46.7L-36.7 59M-31.3 45.2L-39.6 57.1M-33.7 43.5L-42.6 54.9M-36.7 41L-46.4 51.8M-39.1 38.7L-49.4 48.9M-41 36.7L-51.8 46.4M-43.2 34L-54.6 43M-45 31.6L-56.9 40M-46.9 28.8L-59.2 36.4M-48.6 25.8L-61.4 32.6M-49.8 23.3L-62.9 29.5M-51.1 20.4L-64.6 25.7M-52.1 17.7L-65.8 22.4M-53 14.7L-67 18.5M-53.8 11.6L-67.9 14.7M-54.5 7.6L-68.8 9.6M-54.8 4.6L-69.3 5.8M-55 1.3L-69.5 1.7M-55 -1.3L-69.5 -1.6M-54.8 -4.7L-69.2 -5.9M-54.4 -8.4L-68.7 -10.6M-53.8 -11.3L-68 -14.3M-53 -14.6L-67 -18.4M-52.4 -16.8L-66.2 -21.3M-51.2 -20L-64.8 -25.2M-49.6 -23.7L-62.7 -30M-48.7 -25.6L-61.5 -32.4M-47 -28.6L-59.4 -36.1M-45 -31.6L-56.8 -40M-43.2 -34L-54.6 -42.9M-41 -36.6L-51.9 -46.3M-39.2 -38.6L-49.5 -48.7M-36.4 -41.2L-46 -52.1M-34.2 -43.1L-43.2 -54.5M-31.3 -45.2L-39.6 -57.1M-28.5 -47L-36 -59.4M-25.9 -48.5L-32.7 -61.3M-22.9 -50L-28.9 -63.2M-20.7 -50.9L-26.2 -64.4M-17.3 -52.2L-21.8 -66M-14.1 -53.2L-17.8 -67.2M-10.8 -53.9L-13.7 -68.1M-8.5 -54.3L-10.7 -68.7M-4.8 -54.8L-6.1 -69.2M-1.7 -55L-2.2 -69.5M1.6 -55L2 -69.5M4.8 -54.8L6.1 -69.2M7.5 -54.5L9.4 -68.9M11.5 -53.8L14.6 -68M14.3 -53.1L18 -67.1M17.7 -52.1L22.4 -65.8M20.5 -51.1L25.8 -64.5M23 -49.9L29.1 -63.1M26.3 -48.3L33.3 -61M29.1 -46.7L36.7 -59M31.5 -45.1L39.9 -56.9M33.7 -43.4L42.6 -54.9M36.5 -41.2L46.1 -52M38.7 -39.1L48.9 -49.4M41.3 -36.4L52.1 -46M43.4 -33.8L54.8 -42.7M45.1 -31.5L57 -39.8M46.9 -28.7L59.3 -36.3M48.2 -26.5L60.9 -33.5M49.9 -23.1L63.1 -29.2M50.9 -20.8L64.4 -26.2M52.2 -17.3L66 -21.9M53 -14.7L67 -18.6M53.8 -11.3L68 -14.3M54.3 -8.5L68.7 -10.7M54.8 -4.7L69.2 -5.9M55 -1.1L69.5 -1.3" stroke="#1c86ae" stroke-opacity="0.35" stroke-width="0.9"/><path d="M55.5 1.3L64.6 1.5M54.9 7.9L63.9 9.2M53.6 14.5L62.3 16.9M51.8 19.9L60.3 23.1M49 26.1L57 30.3M45.1 32.4L52.5 37.7M41.2 37.2L47.9 43.3M36.8 41.6L42.8 48.4M31.7 45.6L36.9 53M26.3 48.9L30.6 56.9M20.3 51.7L23.6 60.1M14 53.7L16.3 62.5M8.3 54.9L9.7 63.9M1.1 55.5L1.3 64.6M-5.1 55.3L-6 64.3M-11.5 54.3L-13.4 63.2M-17.3 52.7L-20.2 61.4M-23.4 50.3L-27.2 58.6M-29.6 47L-34.4 54.7M-34 43.8L-39.6 51M-39.7 38.8L-46.2 45.2M-43.6 34.3L-50.8 39.9M-47.2 29.1L-55 33.9M-50.2 23.6L-58.4 27.5M-52.7 17.4L-61.4 20.2M-54.4 11L-63.3 12.8M-55.3 4.4L-64.4 5.1M-55.5 -1.8L-64.6 -2.1M-54.8 -8.5L-63.8 -9.9M-53.5 -14.9L-62.2 -17.3M-51.5 -20.8L-59.9 -24.2M-48.6 -26.7L-56.6 -31.1M-45.6 -31.6L-53.1 -36.8M-41.1 -37.2L-47.9 -43.4M-37.3 -41.1L-43.4 -47.8M-31.9 -45.4L-37.2 -52.8M-26.6 -48.7L-30.9 -56.7M-20 -51.8L-23.3 -60.2M-14.2 -53.6L-16.5 -62.4M-7.8 -55L-9 -64M-1.1 -55.5L-1.3 -64.6M4.8 -55.3L5.6 -64.4M11 -54.4L12.8 -63.3M17.6 -52.6L20.5 -61.3M23.1 -50.5L26.9 -58.7M29.3 -47.2L34.1 -54.9M33.9 -43.9L39.5 -51.1M39.1 -39.4L45.5 -45.9M43.9 -34L51.1 -39.6M47.2 -29.2L54.9 -34M50.4 -23.3L58.6 -27.1M52.7 -17.4L61.3 -20.2M54.5 -10.6L63.4 -12.4M55.3 -4.9L64.3 -5.7" stroke="#105a80" stroke-opacity="0.8" stroke-width="2.3"/><path d="M56.4 3.8L62.9 4.3M55.5 10.6L61.9 11.8M54 16.5L60.2 18.4M51.3 23.7L57.2 26.5M48.3 29.4L53.8 32.7M44.7 34.5L49.9 38.5M40.8 39.1L45.5 43.6M35.9 43.6L40 48.6M29.9 47.9L33.3 53.5M24.2 51.1L26.9 56.9M18.7 53.3L20.9 59.4M11.8 55.2L13.2 61.6M5.1 56.3L5.7 62.7M-1.1 56.5L-1.2 63M-7.5 56L-8.3 62.4M-13.9 54.8L-15.5 61.1M-20.7 52.6L-23.1 58.6M-26.2 50L-29.3 55.8M-32.3 46.4L-36 51.7M-37.4 42.3L-41.7 47.2M-41.7 38.1L-46.5 42.5M-45.9 32.9L-51.2 36.7M-49.2 27.8L-54.8 31.1M-52.4 21.1L-58.4 23.6M-54.2 15.9L-60.5 17.7M-55.7 9.2L-62.2 10.3M-56.4 2.4L-62.9 2.7M-56.3 -4.9L-62.8 -5.4M-55.5 -10.6L-61.9 -11.8M-53.8 -17.3L-60 -19.2M-51.6 -23L-57.5 -25.7M-48.6 -28.8L-54.2 -32.2M-44.4 -34.9L-49.5 -38.9M-40.9 -39L-45.6 -43.5M-35.3 -44.1L-39.4 -49.2M-30.6 -47.5L-34.1 -53M-24.9 -50.7L-27.8 -56.5M-19 -53.2L-21.2 -59.3M-11.6 -55.3L-12.9 -61.7M-5.3 -56.2L-5.9 -62.7M0.3 -56.5L0.3 -63M8.1 -55.9L9 -62.3M13.8 -54.8L15.4 -61.1M20.3 -52.7L22.7 -58.8M25.9 -50.2L28.9 -56M31.7 -46.7L35.4 -52.1M36.9 -42.8L41.1 -47.7M41.6 -38.3L46.4 -42.7M45.5 -33.5L50.7 -37.3M49.6 -27.1L55.3 -30.2M52.1 -21.8L58.1 -24.3M54.6 -14.7L60.8 -16.4M55.7 -9.3L62.1 -10.4M56.4 -3L62.9 -3.3" stroke="#136890" stroke-opacity="0.85" stroke-width="1.9"/><circle r="64.4" stroke="#105a80" stroke-width="1.7" stroke-opacity="0.85" stroke-dasharray="4.3 3.19"/><circle r="56.3" stroke="#136a92" stroke-width="1.2" stroke-opacity="0.5" stroke-dasharray="5 2.1"/><circle r="69" stroke="#126890" stroke-width="1.8" stroke-opacity="0.65" stroke-dasharray="3.4 0.95"/><circle r="48.9" stroke="url(#g2i)" stroke-width="11.6"/><circle r="54" stroke="#15749c" stroke-width="1.2" stroke-opacity="0.5"/><path d="M44 0.4L53.5 0.5M43.9 2.2L53.4 2.6M43.7 5.4L53.1 6.6M43.3 7.8L52.7 9.5M42.8 10.2L52 12.4M42.1 12.7L51.2 15.4M41.4 15L50.3 18.2M40.3 17.6L49 21.4M39.1 20.1L47.6 24.4M38.1 22L46.4 26.7M37 23.8L45 29M35.3 26.3L42.9 31.9M33.8 28.2L41.1 34.3M32 30.2L38.9 36.7M30.4 31.8L36.9 38.7M28.4 33.6L34.5 40.9M26.3 35.3L31.9 42.9M24 36.8L29.2 44.8M21.7 38.3L26.4 46.5M19.6 39.4L23.8 47.9M17.2 40.5L20.9 49.2M15.2 41.3L18.4 50.2M12.2 42.3L14.9 51.4M9.9 42.9L12.1 52.1M7.7 43.3L9.3 52.7M5.1 43.7L6.2 53.1M2.6 43.9L3.1 53.4M0.1 44L0.2 53.5M-2.9 43.9L-3.5 53.4M-5.2 43.7L-6.3 53.1M-7.8 43.3L-9.5 52.6M-9.9 42.9L-12 52.1M-12.8 42.1L-15.5 51.2M-15.4 41.2L-18.7 50.1M-17.8 40.3L-21.6 48.9M-20.1 39.1L-24.4 47.6M-22 38.1L-26.8 46.3M-24.3 36.7L-29.5 44.6M-26.1 35.4L-31.8 43M-28.3 33.7L-34.4 41M-30.3 31.9L-36.8 38.8M-32.2 30L-39.1 36.5M-33.9 28L-41.3 34.1M-35.4 26.1L-43.1 31.7M-36.8 24.1L-44.8 29.3M-38 22.2L-46.2 27M-39.2 20.1L-47.6 24.4M-40.5 17.1L-49.3 20.8M-41.3 15.3L-50.2 18.6M-42.1 12.7L-51.2 15.4M-42.7 10.5L-51.9 12.8M-43.3 7.9L-52.6 9.6M-43.7 5.5L-53.1 6.7M-43.9 3L-53.4 3.6M-44 0.4L-53.5 0.5M-43.9 -2.8L-53.4 -3.4M-43.7 -4.8L-53.2 -5.9M-43.3 -7.5L-52.7 -9.2M-42.7 -10.6L-51.9 -12.8M-42.3 -12.2L-51.4 -14.9M-41.3 -15.1L-50.2 -18.4M-40.5 -17.1L-49.3 -20.8M-39.5 -19.4L-48 -23.6M-38 -22.2L-46.2 -27M-36.6 -24.5L-44.5 -29.8M-35.1 -26.5L-42.7 -32.3M-33.7 -28.3L-41 -34.4M-31.9 -30.3L-38.8 -36.8M-30.4 -31.8L-37 -38.6M-28 -33.9L-34.1 -41.2M-26.2 -35.3L-31.9 -43M-24.2 -36.8L-29.4 -44.7M-21.6 -38.3L-26.3 -46.6M-19.7 -39.4L-23.9 -47.9M-17.8 -40.2L-21.7 -48.9M-15.3 -41.2L-18.7 -50.1M-13 -42L-15.8 -51.1M-10.5 -42.7L-12.8 -52M-7.6 -43.3L-9.3 -52.7M-4.7 -43.7L-5.7 -53.2M-2.8 -43.9L-3.4 -53.4M-0.2 -44L-0.3 -53.5M2.7 -43.9L3.2 -53.4M5.3 -43.7L6.4 -53.1M7.6 -43.3L9.2 -52.7M9.7 -42.9L11.8 -52.2M12.5 -42.2L15.3 -51.3M15.2 -41.3L18.5 -50.2M17.1 -40.5L20.8 -49.3M19.5 -39.4L23.8 -47.9M22 -38.1L26.8 -46.3M24 -36.9L29.2 -44.8M26.1 -35.4L31.7 -43.1M28.6 -33.4L34.8 -40.7M30.2 -32L36.7 -39M32.1 -30.1L39 -36.7M33.7 -28.3L40.9 -34.5M35.1 -26.5L42.7 -32.2M36.9 -24L44.9 -29.1M38.1 -22L46.3 -26.7M39.4 -19.7L47.9 -23.9M40.6 -17L49.3 -20.7M41.2 -15.4L50.1 -18.8M42 -13L51.1 -15.8M42.9 -9.9L52.1 -12M43.3 -8.1L52.6 -9.8M43.7 -5.2L53.1 -6.3M43.9 -2.8L53.4 -3.4" stroke="#0c5478" stroke-opacity="0.3" stroke-width="1.1"/><path d="M44.1 5.9L46.9 6.3M36 25.8L38.9 27.9M26.8 35.6L28.8 38.3M17.9 44.3L19.1 47.4M12.4 42.8L13.1 45.3M10.5 48.4L11 50.8M-5.9 47.8L-6.2 50.4M-10.9 45.6L-11.4 47.8M-24.4 38.3L-25.9 40.6M-31.3 35L-32.7 36.5M-42.8 14.3L-45.9 15.3M-47.9 12.6L-50.3 13.2M-42 -13.1L-44.6 -13.9M-24.8 -41.3L-26.8 -44.6M-2.3 -45.6L-2.4 -48.4M2.7 -48.8L2.9 -51.9M14.2 -47.4L14.9 -49.8M16 -45.1L17 -47.7M22.2 -41.5L23.4 -43.7M28.4 -35L31.3 -38.5M37.7 -23L40.3 -24.6M42.9 -18L45.7 -19.2M46.2 -7.2L48.6 -7.6" stroke="#0b5278" stroke-opacity="0.55" stroke-width="0.9"/><path d="M44.7 1.8L48.6 1.9M45.2 14.6L48 15.5M25.7 38.7L28.3 42.7M23.2 40.2L24.3 42.2M22 41.8L23.4 44.5M16.6 45.9L17.7 48.9M0.6 44.7L0.7 47.3M-9.2 45.2L-9.7 47.5M-12.2 42.9L-13.2 46.2M-23 42.3L-24.5 45.2M-28 34.1L-29.6 36.1M-35.7 30.9L-37.5 32.5M-40.4 21L-43.6 22.7M-43.6 17.8L-47.4 19.3M-45.8 14.1L-48.3 14.8M-49.3 6.2L-51.3 6.4M-45 -1.5L-48.6 -1.6M-44.4 -9.3L-47.9 -10M-42.6 -16.7L-44.6 -17.5M-45.8 -18.6L-48.2 -19.5M-41.2 -19.7L-44.1 -21.1M-37.9 -26.4L-39.7 -27.6M-36.3 -27.1L-38.2 -28.5M-35.8 -31L-38.3 -33.1M-26.4 -41.1L-28.1 -43.8M-21.8 -41.3L-23.8 -45.2M-19.1 -44.8L-20.2 -47.4M-18.2 -46L-19.1 -48.3M-13.5 -45.6L-14.3 -48M-6.4 -48.8L-6.8 -51.6M0.3 -45.4L0.3 -49.1M5.5 -45L5.9 -48.3M27.5 -36.8L30.1 -40.3M36.1 -33.9L37.9 -35.6M37.6 -28.8L40.7 -31.2" stroke="#0e5e86" stroke-opacity="0.3" stroke-width="0.9"/><path d="M44.8 1.2L46.9 1.3M41.3 20.2L43.6 21.4M35 29.1L37.2 30.9M-19.2 40.9L-20.7 44.1M-34.6 -34.6L-36.3 -36.2M-27 -38L-29.1 -41M-10.1 -45.6L-11 -49.6M-7.7 -46.1L-8.4 -50.4M18.9 -46.3L19.7 -48.1M24.9 -39.9L26.3 -42.2M38 -30.2L39.8 -31.7M44 -23.2L46 -24.3M45.3 -11.8L47.8 -12.5" stroke="#8ceaff" stroke-opacity="0.5" stroke-width="0.9"/><path d="M47 7.8L51.3 8.5M45.2 11.4L49.7 12.5M42.3 14.5L45.7 15.7M45.4 20.4L47.4 21.4M42.4 23.9L45.3 25.5M38.1 25.1L40.5 26.7M36.2 33.8L38 35.5M32.8 34.3L34.8 36.4M30.2 36.2L32.9 39.5M8.2 46.4L8.8 50.1M4.8 46.6L5.2 50.8M2.3 49.7L2.4 51.9M-3 45.9L-3.2 48.5M-15.1 42.1L-16.6 46.5M-18.3 40.3L-19.6 43.1M-29.2 37.3L-30.8 39.3M-35 34.1L-37.2 36.3M-39.5 30.3L-41.3 31.6M-39.8 26.6L-41.9 28M-40.1 23L-44 25.2M-49.1 8.6L-51.2 9M-44.1 1.9L-48.9 2.1M-47.8 1.2L-50 1.3M-46 -6.5L-49.8 -7M-45.2 -8.1L-49.2 -8.8M-39.3 -23.6L-42.4 -25.5M-31.2 -32.4L-33.4 -34.7M-30.1 -35.2L-33.2 -38.8M9 -43.9L9.7 -47.5M10.7 -47.5L11.2 -49.8M21.8 -39L23 -41.2M31.9 -33.4L33.3 -34.8M40.7 -28L42.8 -29.5M43.9 -14.9L46.6 -15.9M47.4 -14L49.9 -14.7M45 -4L48.2 -4.2M47.7 -2L50.7 -2.1" stroke="#7fe0fa" stroke-opacity="0.28" stroke-width="0.9"/><path d="M65.5 1.6L68 1.7M48.7 37L51.2 39M-30.8 51.5L-32.6 54.6M-32.3 51.2L-33.8 53.6M-51.9 39.7L-53.7 41.1M-60.5 11.8L-63.7 12.4M-55.3 -35.7L-57.1 -36.9M-44.4 -37.4L-46.6 -39.3M-16.8 -60.9L-17.4 -63.1M-13.9 -62.6L-14.5 -65.5M43 -44.2L45.2 -46.5M65.4 -7.6L67.5 -7.9" stroke="#0b5278" stroke-opacity="0.55" stroke-width="0.9"/><path d="M59 1.8L61.8 1.9M57.7 5.5L60.5 5.8M48 32.2L50 33.5M45.6 41.9L47.2 43.4M44.5 47.3L46.4 49.5M35.5 49.5L37.1 51.6M32.8 52.6L34.8 55.9M30.3 56.5L31.9 59.4M16.2 63.3L16.8 65.9M-8 60.9L-8.4 63.8M-11.6 60.5L-12.2 63.5M-19.6 58.4L-20.6 61.3M-25.9 53.4L-26.8 55.3M-37.7 43.8L-39.7 46.1M-44.9 38.6L-46.9 40.4M-56.9 25.1L-60.6 26.7M-56.9 20.4L-60.4 21.7M-55 12.6L-58.5 13.4M-60.5 8.2L-63.7 8.7M-56.1 -2.2L-59.4 -2.4M-58.4 -8.3L-62.1 -8.8M-55.3 -14L-57.3 -14.5M-56.2 -34.2L-58.1 -35.3M-47.2 -42.2L-49.4 -44.2M-41 -44L-42.7 -45.8M-33 -52.8L-34.9 -55.9M-3.2 -61.2L-3.3 -63.6M3.5 -61.4L3.8 -64.9M25.8 -60.1L26.6 -62M31.8 -47L33.8 -50M37.3 -48.1L39.4 -50.9M42.1 -39.1L44.7 -41.5M47.8 -37.8L50.1 -39.6M52.2 -33.6L55.3 -35.6M55.4 -32.8L57.3 -34M58.8 -24L61 -24.9M57.7 -20.9L60.7 -22M63.9 -14.3L66.4 -14.8" stroke="#0e5e86" stroke-opacity="0.3" stroke-width="0.9"/><path d="M54.7 13L57.9 13.7M59.1 28.8L61.2 29.7M28.3 48.7L30 51.5M24.9 60.6L25.8 62.9M19.5 56.2L20.8 59.9M7.3 63.7L7.6 66.2M-40 40.4L-42.6 43.1M-40.6 38.8L-42.7 40.9M-53.8 29.5L-56.8 31.1M-62.3 -17L-64.6 -17.7M-55.5 -26.7L-58.6 -28.3M-39.1 -44.1L-41.5 -46.8M-31.5 -57.8L-32.6 -59.7M-22.8 -51.8L-23.6 -53.7M1 -59.1L1 -62.5M41.2 -50.6L43 -52.7M50.5 -41.6L52.5 -43.3M57.4 -2.6L60.7 -2.8" stroke="#8ceaff" stroke-opacity="0.5" stroke-width="0.9"/><path d="M63.9 11.7L66.1 12.1M54.3 15.8L57.8 16.8M54.4 19.3L56.7 20.1M58.6 24.7L61.1 25.8M53.2 29.4L56.4 31.2M44 35.2L46 36.8M37.3 43.2L39.6 45.9M16.2 54L16.9 56.4M12.1 60.4L12.8 63.6M4.4 55.9L4.6 59.5M-1.5 64.1L-1.6 67.9M-4.3 56.5L-4.6 60.4M-13 60.9L-13.5 63.6M-18.1 57.5L-18.8 59.8M-27.3 59.6L-28.3 61.8M-34.9 47.3L-36.8 49.9M-53.4 35.5L-55.9 37.1M-52 27.2L-55.2 28.9M-55 15.5L-58.4 16.4M-56.6 4L-60.5 4.3M-56.4 -0.3L-58.6 -0.4M-62.7 -11.3L-66.3 -12M-59.1 -23.4L-61.4 -24.3M-54.9 -25.1L-57.4 -26.2M-47.7 -35.5L-49.7 -37M-35.9 -50.2L-38.2 -53.4M-25.7 -54.9L-26.5 -56.7M-22.9 -61.3L-23.8 -63.7M-9 -59.6L-9.5 -62.9M-5.6 -56.9L-5.9 -58.9M6.8 -63L7 -65.5M11.5 -64L12 -66.2M14.1 -55.6L15.1 -59.4M20.4 -62.5L21.1 -64.6M18.1 -53.8L19.3 -57.2M27 -55.5L28.7 -59.1M31 -57.4L32.3 -59.8M54.7 -28.9L58.2 -30.7M56.5 -15.7L59.6 -16.6M59.1 -11.8L61.2 -12.2" stroke="#7fe0fa" stroke-opacity="0.28" stroke-width="0.9"/><path d="M62.3 13.2L66.9 14.1M55.9 15.2L59.1 16.1M42.6 42.9L44.7 45M31.9 57.3L33.1 59.5M25 55.3L25.8 57.1M14.5 42.7L15.5 45.9M7.1 45.1L7.8 49.6M-0.9 47.5L-0.9 50.1M-4 49.1L-4.1 51.3M-27.8 45.1L-30 48.7M-26.4 36.8L-28.4 39.6M-45.4 35.9L-46.6 36.9M-49.5 34.5L-52.1 36.2M-59.4 26.9L-62.3 28.2M-57.4 23L-59.9 24M-56.7 19.4L-60.2 20.6M-59 15.6L-63.7 16.8M-46.2 -20.9L-49.4 -22.3M-55.6 -33.6L-57.1 -34.5M-32.8 -42.5L-35.6 -46.3M-24.4 -38.3L-26.6 -41.9M-22.8 -47.5L-24.7 -51.4M-6.4 -62.8L-6.8 -66.4M1.3 -52.1L1.3 -55.3M6.5 -48.8L6.8 -50.8M9.5 -46.8L10.4 -51M19.1 -42.5L20.2 -45M32.5 -53.4L33.3 -54.7M33.3 -36.9L34.4 -38.1M37.5 -36.4L38.8 -37.8M55.7 -26.5L58.7 -27.9M48 -9.7L50.1 -10.2" stroke="#e4f2ee" stroke-opacity="0.75" stroke-width="0.8"/></g>
</defs>
<rect x="58.5" y="315.5" width="909" height="401" fill="none" stroke="#ff00ff" stroke-width="1" shape-rendering="crispEdges"/>
<g clip-path="url(#dc)">
<path d="M58 481.2H968" stroke="#38c4ee" stroke-width="1.8"/>
<path d="M58 481.2H968" stroke="#1a7ca4" stroke-width="1.8" stroke-dasharray="9 72.1" stroke-dashoffset="-20"/>
<path d="M58 643.4H968" stroke="#38c4ee" stroke-width="1.8"/>
<path d="M58 643.4H968" stroke="#1a7ca4" stroke-width="1.8" stroke-dasharray="9 72.1" stroke-dashoffset="-20"/>
<use href="#m2" transform="translate(126.8 318.4) rotate(230.2)"/>
<use href="#m2" transform="translate(289.1 318.4) rotate(9)"/>
<use href="#m2" transform="translate(451.5 318.4) rotate(99)"/>
<use href="#m2" transform="translate(613.8 318.4) rotate(80.4)"/>
<use href="#m2" transform="translate(776.2 318.4) rotate(265.1)"/>
<use href="#m2" transform="translate(938.5 318.4) rotate(243.6)"/>
<use href="#m1" transform="translate(125.4 481.1) rotate(321.2)"/>
<use href="#m1" transform="translate(287.6 481.1) rotate(31.3)"/>
<use href="#m1" transform="translate(449.9 481.1) rotate(151.9)"/>
<use href="#m1" transform="translate(612.1 481.1) rotate(10.7)"/>
<use href="#m1" transform="translate(774.4 481.1) rotate(78.7)"/>
<use href="#m1" transform="translate(936.6 481.1) rotate(181.9)"/>
<use href="#m2" transform="translate(126.8 643.4) rotate(9.6)"/>
<use href="#m2" transform="translate(289.1 643.4) rotate(71.6)"/>
<use href="#m2" transform="translate(451.5 643.4) rotate(234)"/>
<use href="#m2" transform="translate(613.8 643.4) rotate(196.2)"/>
<use href="#m2" transform="translate(776.2 643.4) rotate(79.4)"/>
<use href="#m2" transform="translate(938.5 643.4) rotate(212.1)"/>
<path d="M58 316.6H968" stroke="#2ba6d0" stroke-width="4.4"/>
<path d="M58 316.2H968" stroke="#146e96" stroke-width="2.4" stroke-dasharray="4.5 5.5"/>
<path d="M58 317.2H968" stroke="#40c8f0" stroke-width="1.6" stroke-dasharray="4 6" stroke-dashoffset="-5.5"/>
<path d="M966 319V358" stroke="#2aa8d2" stroke-width="4"/>
<path d="M966 319V358" stroke="#15749c" stroke-width="2" stroke-dasharray="4 5"/>
<path d="M967 358V716" stroke="#2aa8d2" stroke-width="1.4"/>
</g>
</g>
<g shape-rendering="crispEdges">
<rect x="206" y="315" width="11" height="1" fill="#ff00ff"/>
<rect x="368" y="315" width="11" height="1" fill="#ff00ff"/>
<rect x="530" y="315" width="11" height="1" fill="#ff00ff"/>
<rect x="693" y="315" width="11" height="1" fill="#ff00ff"/>
<rect x="855" y="315" width="11" height="1" fill="#ff00ff"/>
<g style="mix-blend-mode:difference" fill="#fff">
<rect x="55" y="312" width="6" height="6"/>
<rect x="55" y="513" width="6" height="6"/>
<rect x="55" y="713" width="6" height="6"/>
<rect x="509" y="312" width="6" height="6"/>
<rect x="509" y="713" width="6" height="6"/>
<rect x="963" y="312" width="6" height="6"/>
<rect x="963" y="513" width="6" height="6"/>
<rect x="963" y="713" width="6" height="6"/>
</g>
<path d="M119.5 313.5H131.5V323.5H119.5ZM125.5 309V328M116 318.5H135" stroke="#ff0000" stroke-width="1" fill="none"/>
<path d="M57 307H60V314H67V317H60V324H57V317H50V314H57Z" fill="#000"/><path d="M58 308H59V315H66V316H59V323H58V316H51V315H58Z" fill="#fff"/>
</g>
</svg>
<!-- vertical scrollbar -->
<div class="abs" style="left:1034px;top:38px;width:19px;height:770px;background:#f0f0f0"></div>
<div class="abs" style="left:1051px;top:37px;width:2px;height:771px;background:#fbfbfb"></div>
<div class="abs" style="left:1034px;top:38px;width:1px;height:751px;background:#fff"></div>
<div class="abs" style="left:1034px;top:38px;width:17px;height:7px;border-top:1px solid #6a6a6a;border-left:1px solid #fff;border-right:2px solid #808080;border-bottom:2px solid #808080;background:#fafafa"></div>
<svg class="abs" style="left:1035px;top:48px" width="16" height="12"><path d="M4 9.5L8 5.5L12 9.5" stroke="#5a5a5a" stroke-width="2" fill="none"/></svg>
<div class="abs" style="left:1035px;top:401px;width:15px;height:45px;background:#cdcdcd"></div>
<svg class="abs" style="left:1035px;top:775px" width="16" height="12"><path d="M4 3.5L8 7.5L12 3.5" stroke="#5a5a5a" stroke-width="2" fill="none"/></svg>
<!-- horizontal scrollbar -->
<div class="abs" style="left:0;top:789px;width:1053px;height:19px;background:#f0f0f0"></div>
<div class="abs" style="left:0;top:807px;width:1053px;height:1px;background:#fff"></div>
<div class="abs" style="left:267px;top:790px;width:168px;height:15px;background:#cdcdcd"></div>
<svg class="abs" style="left:1019px;top:790px" width="14" height="16"><path d="M4.5 4L8.6 7.7L4.5 11.4" stroke="#5a5a5a" stroke-width="2" fill="none"/></svg>
<svg class="abs" style="left:1039px;top:795px" width="10" height="10" shape-rendering="crispEdges"><path d="M7 1h2v2h-2zM7 4h2v2h-2zM7 7h2v2h-2zM4 4h2v2h-2zM4 7h2v2h-2zM1 7h2v2h-2z" fill="#bfbfbf"/></svg>
<!-- panel 1 -->
<div class="abs" style="left:1053px;top:37px;width:4px;height:771px;background:#5e5e5e"></div>
<div class="abs" style="left:1057px;top:60px;width:223px;height:748px;background:#f0f0f0"></div>
<div class="hdr" style="left:1057px;width:223px;padding-left:6px">Параметры объекта</div>
<svg class="abs" style="left:1247px;top:42px" width="11" height="12" viewBox="0 0 11 12"><path d="M3.5 1.5H7.5M4 1.5V6.5M7 1.5V6.5M6 1.5V6.5M2 6.5H9M5.5 6.5V10.5" stroke="#fff" stroke-width="1.1" fill="none"/></svg>
<svg class="abs" style="left:1263px;top:42px" width="11" height="11" viewBox="0 0 11 11"><path d="M1.5 1.5L9.5 9.5M9.5 1.5L1.5 9.5" stroke="#fff" stroke-width="1.4" fill="none"/></svg>
<div class="abs" style="left:1061px;top:180px;width:215px;height:588px;background:#fff;border-right:1px solid #dcdcdc;border-bottom:1px solid #dcdcdc"></div>
<div class="tab" style="left:1062px;top:65px;width:213px;padding-left:17px">Соединители</div>
<div class="tab" style="left:1062px;top:84px;width:213px;padding-left:17px">Компенсация стягивания</div>
<div class="tab" style="left:1062px;top:103px;width:213px;padding-left:17px">Строчка стразами</div>
<div class="tab" style="left:1062px;top:122px;width:213px;padding-left:17px">Заполнение стразами</div>
<div class="tab" style="left:1062px;top:141px;width:100px;padding-left:17px">Контуры</div>
<div class="tab" style="left:1162px;top:141px;width:113px;padding-left:20px;border-left:1px solid #dcdcdc">Укрепление</div>
<div class="tab" style="left:1062px;top:160px;width:110px;padding-left:18px;height:20px">Специальные</div>
<div class="tab" style="left:1171px;top:158px;width:106px;height:23px;padding-left:18px;background:#fff;border:1px solid #dcdcdc;border-bottom:0;line-height:22px">Заполнение</div>
<div class="abs" style="left:1275px;top:65px;width:1px;height:93px;background:#dcdcdc"></div>
<svg class="abs" style="left:1066px;top:67px" width="16" height="15" viewBox="0 0 16 15"><path d="M3 3L13.5 12.5" stroke="#000" stroke-width="1" stroke-dasharray="2 1.3" fill="none"/><path d="M1.5 1.5L6 2.2L2.6 5.4Z M14.8 13.8L10.4 13.2L13.6 10Z" fill="#000"/></svg>
<svg class="abs" style="left:1066px;top:87px" width="17" height="14" viewBox="0 0 17 14"><path d="M1 3.5H16M1 6.5H16" stroke="#8a8a8a" stroke-width="1"/><path d="M2.5 1V12M2.5 12L5 4.5L6 12L8.5 4.5L9.5 12L12 4.5L13 12L15 4.5V12" stroke="#000" stroke-width="1" fill="none"/><path d="M5 1V5M8.5 1V5M12 1V5M15 1V5" stroke="#555" stroke-width="1"/></svg>
<svg class="abs" style="left:1066px;top:105px" width="17" height="15" viewBox="0 0 17 15"><path d="M3.5 11.5L13 3.5" stroke="#7a7a7a" stroke-width="1.5"/><circle cx="3.8" cy="11.2" r="2.6" fill="#808080"/><circle cx="8.3" cy="7.6" r="2.6" fill="#808080"/><circle cx="12.8" cy="3.8" r="2.8" fill="#808080"/><path d="M2.3 10.2a2 2 0 0 1 3 0M6.8 6.6a2 2 0 0 1 3 0M11.2 2.8a2 2 0 0 1 3.2 0" stroke="#d0d0d0" stroke-width="0.8" fill="none"/></svg>
<svg class="abs" style="left:1066px;top:124px" width="17" height="15" viewBox="0 0 17 15"><circle cx="4.5" cy="4" r="3.1" fill="#808080"/><circle cx="12" cy="4" r="3.1" fill="#808080"/><circle cx="4.5" cy="11" r="3.1" fill="#808080"/><circle cx="12" cy="11" r="3.1" fill="#808080"/><path d="M2.4 3.6a2.3 2.3 0 0 1 4.2 0M9.9 3.6a2.3 2.3 0 0 1 4.2 0M2.4 10.6a2.3 2.3 0 0 1 4.2 0M9.9 10.6a2.3 2.3 0 0 1 4.2 0" stroke="#d8d8d8" stroke-width="0.8" fill="none"/></svg>
<svg class="abs" style="left:1069px;top:143px" width="11" height="16" viewBox="0 0 11 16"><path d="M5.5 0.8C3.5 3 1.5 5.5 1.5 8.5V11H9.5V8.5C9.5 5.5 7.5 3 5.5 0.8Z" fill="#f4f4f4" stroke="#7a7a7a" stroke-width="1.1"/><path d="M5.5 2V8" stroke="#7a7a7a" stroke-width="1"/><path d="M2 11.5H9V15H2Z" fill="#8a8a8a"/><path d="M3.5 12.5V15M7.5 12.5V15" stroke="#e8e8e8" stroke-width="0.8"/></svg>
<svg class="abs" style="left:1066px;top:162px" width="15" height="15" viewBox="0 0 15 15"><path d="M7.5 1.2L9.3 5.7L14 6L10.4 9L11.6 13.7L7.5 11.1L3.4 13.7L4.6 9L1 6L5.7 5.7Z" fill="#f0f0f0" stroke="#000" stroke-width="1.2" stroke-linejoin="miter"/><path d="M11.6 13.7L7.5 11.1L3.4 13.7" stroke="#666" stroke-width="0.8" fill="none"/></svg>
<svg class="abs" style="left:1167px;top:144px" width="15" height="14" viewBox="0 0 15 14"><path d="M1 3.5H14M1 7.5H14M1 11.5H14M7.5 1V13" stroke="#8c8c8c" stroke-width="1"/><path d="M1.5 1V13M13.5 1V13" stroke="#7a7a7a" stroke-width="1.2"/><path d="M1.8 11.5L5.8 5M7.8 11.5L11.8 5" stroke="#000" stroke-width="1.4" stroke-dasharray="2.2 1.2"/><path d="M1.5 9V13M7.5 10.5V13M13.5 10.5V13" stroke="#000" stroke-width="1.4"/></svg>
<svg class="abs" style="left:1176px;top:161px" width="18" height="17" viewBox="0 0 18 17"><path d="M6.5 1.5L1.5 8L6 15.5L14 8.5Z" fill="#fafafa" stroke="#8a8a8a" stroke-width="1"/><path d="M3.3 10.5L10 5.2L14 8.5L6 15.5Z" fill="#a0a0a0"/><path d="M7.2 1.2c1.2-0.6 2.4 0.2 2.6 1.6l0.4 3.6" stroke="#8a8a8a" stroke-width="1" fill="none"/><path d="M10 4.5L16.8 8.2L15.6 10.4L11.8 8.6Z" fill="#909090"/><path d="M5 14.8L8 16" stroke="#8a8a8a" stroke-width="1"/></svg>
<div class="abs" style="left:1064px;top:185px;width:209px;height:35px;background:#f0f0f0"></div>
<div class="abs s" style="left:1072px;top:188px;width:189px;height:21px;background:#e1e1e1;border:1px solid #adadad;line-height:19px;padding-left:3px">Заполнение мотивами<svg style="position:absolute;right:4px;top:7px" width="11" height="7" viewBox="0 0 11 7"><path d="M1 1L5.5 5.5L10 1" stroke="#404040" stroke-width="1.2" fill="none"/></svg></div>
<div class="abs" style="left:1257px;top:220px;width:16px;height:545px;background:#f0f0f0"></div>
<div class="abs" style="left:1257px;top:237px;width:15px;height:484px;background:#cdcdcd"></div>
<svg class="abs" style="left:1257px;top:223px" width="16" height="12"><path d="M4 8.5L8 4.5L12 8.5" stroke="#505050" stroke-width="1.6" fill="none"/></svg>
<svg class="abs" style="left:1257px;top:750px" width="16" height="12"><path d="M4 3.5L8 7.5L12 3.5" stroke="#505050" stroke-width="1.6" fill="none"/></svg>
<div class="btn s" style="left:1126px;top:237px;width:61px;height:18px;line-height:16px">Раскладка</div>
<div class="sep" style="top:263px"></div>
<div class="lbl" style="left:1104px;width:100px;text-align:center;top:277px">Мотив 1</div>
<div class="lbl" style="left:1071px;top:297.7px;text-align:left">Набор:</div>
<div class="cmbw" style="top:292px"><svg style="position:absolute;left:3px;top:4px" width="14" height="14" viewBox="0 0 14 14"><path d="M1.5 1.8L12.5 3.6L2 5.4L12.5 7.2L2 9L12.5 10.8L2.5 12.6" stroke="#f2503c" stroke-width="1.7" fill="none" stroke-linejoin="round"/></svg><span style="position:absolute;left:21px">anibell</span><svg style="position:absolute;right:4px;top:9px" width="11" height="7" viewBox="0 0 11 7"><path d="M1 1L5.5 5.5L10 1" stroke="#404040" stroke-width="1.2" fill="none"/></svg></div>
<div class="btn s" style="left:1075px;top:325px;width:18px;height:17px;line-height:14px">&lt;</div>
<div class="cmbg" style="top:326px">oo-1<svg style="position:absolute;right:3px;top:7px" width="11" height="7" viewBox="0 0 11 7"><path d="M1 1L5.5 5.5L10 1" stroke="#404040" stroke-width="1.2" fill="none"/></svg></div>
<div class="lbl" style="left:1060px;width:79px;top:359.5px">Размер X:</div>
<div class="spin" style="top:355px">28.21<i><svg style="position:absolute;left:2px;top:1px" width="9" height="13" viewBox="0 0 9 13"><path d="M4.5 0L8.4 4.2H5.5V6.5H3.5V4.2H0.6Z" fill="#f01020"/><path d="M4.5 13L8.4 8.8H5.5V6.5H3.5V8.8H0.6Z" fill="#108a10"/></svg></i></div>
<div class="lbl" style="left:1205px;top:359px;text-align:left">мм</div>
<div class="lbl" style="left:1060px;width:79px;top:389.0px">Размер Y:</div>
<div class="spin" style="top:384.5px">28.21<i><svg style="position:absolute;left:2px;top:1px" width="9" height="13" viewBox="0 0 9 13"><path d="M4.5 0L8.4 4.2H5.5V6.5H3.5V4.2H0.6Z" fill="#f01020"/><path d="M4.5 13L8.4 8.8H5.5V6.5H3.5V8.8H0.6Z" fill="#108a10"/></svg></i></div>
<div class="lbl" style="left:1205px;top:388.5px;text-align:left">мм</div>
<svg class="abs" style="left:1224px;top:365px" width="16" height="32" shape-rendering="crispEdges"><path d="M0 1.5H14.5V4.5M0 31.0H14.5V28.0" stroke="#000" stroke-width="1" fill="none"/></svg>
<div class="lock" style="top:373.0px"><svg style="position:absolute;left:1px;top:1px" width="14" height="14" viewBox="0 0 14 14"><path d="M3.8 6V4.2a3.2 3.2 0 0 1 6.4 0V6" stroke="#111" stroke-width="1.5" fill="none"/><rect x="2" y="6" width="10" height="6.5" fill="#f8f8f8" stroke="#111" stroke-width="1.2"/><rect x="6" y="8" width="2" height="3" fill="#000"/></svg></div>
<div class="sep" style="top:416px"></div>
<div class="cb" style="left:1122px;top:422px"><svg width="11" height="11" viewBox="0 0 11 11" style="position:absolute;left:0;top:0"><path d="M1.5 5.5L4.2 8.5L9.5 2" stroke="#000" stroke-width="1.2" fill="none"/></svg></div>
<div class="lbl" style="left:1137px;top:423px;text-align:left">Мотив 2</div>
<div class="lbl" style="left:1071px;top:443.7px;text-align:left">Набор:</div>
<div class="cmbw" style="top:438px"><svg style="position:absolute;left:3px;top:4px" width="14" height="14" viewBox="0 0 14 14"><path d="M1.5 1.8L12.5 3.6L2 5.4L12.5 7.2L2 9L12.5 10.8L2.5 12.6" stroke="#f2503c" stroke-width="1.7" fill="none" stroke-linejoin="round"/></svg><span style="position:absolute;left:21px">anibell</span><svg style="position:absolute;right:4px;top:9px" width="11" height="7" viewBox="0 0 11 7"><path d="M1 1L5.5 5.5L10 1" stroke="#404040" stroke-width="1.2" fill="none"/></svg></div>
<div class="btn s" style="left:1075px;top:471px;width:18px;height:17px;line-height:14px">&lt;</div>
<div class="cmbg" style="top:469px">oo-2<svg style="position:absolute;right:3px;top:7px" width="11" height="7" viewBox="0 0 11 7"><path d="M1 1L5.5 5.5L10 1" stroke="#404040" stroke-width="1.2" fill="none"/></svg></div>
<div class="lbl" style="left:1060px;width:79px;top:506.5px">Размер X:</div>
<div class="spin" style="top:502px">28.21<i><svg style="position:absolute;left:2px;top:1px" width="9" height="13" viewBox="0 0 9 13"><path d="M4.5 0L8.4 4.2H5.5V6.5H3.5V4.2H0.6Z" fill="#f01020"/><path d="M4.5 13L8.4 8.8H5.5V6.5H3.5V8.8H0.6Z" fill="#108a10"/></svg></i></div>
<div class="lbl" style="left:1205px;top:506px;text-align:left">мм</div>
<div class="lbl" style="left:1060px;width:79px;top:535.0px">Размер Y:</div>
<div class="spin" style="top:530.5px">28.21<i><svg style="position:absolute;left:2px;top:1px" width="9" height="13" viewBox="0 0 9 13"><path d="M4.5 0L8.4 4.2H5.5V6.5H3.5V4.2H0.6Z" fill="#f01020"/><path d="M4.5 13L8.4 8.8H5.5V6.5H3.5V8.8H0.6Z" fill="#108a10"/></svg></i></div>
<div class="lbl" style="left:1205px;top:534.5px;text-align:left">мм</div>
<svg class="abs" style="left:1224px;top:512px" width="16" height="32" shape-rendering="crispEdges"><path d="M0 1.5H14.5V4.5M0 30.0H14.5V27.0" stroke="#000" stroke-width="1" fill="none"/></svg>
<div class="lock" style="top:519.0px"><svg style="position:absolute;left:1px;top:1px" width="14" height="14" viewBox="0 0 14 14"><path d="M3.8 6V4.2a3.2 3.2 0 0 1 6.4 0V6" stroke="#111" stroke-width="1.5" fill="none"/><rect x="2" y="6" width="10" height="6.5" fill="#f8f8f8" stroke="#111" stroke-width="1.2"/><rect x="6" y="8" width="2" height="3" fill="#000"/></svg></div>
<div class="sep" style="top:562px"></div>
<div class="lbl" style="left:1104px;width:100px;text-align:center;top:569px">Колонка</div>
<div class="lbl" style="left:1060px;width:79px;top:590px">Интервал:</div>
<div class="spin" style="top:586px">28.21<i><svg style="position:absolute;left:2px;top:1px" width="9" height="13" viewBox="0 0 9 13"><path d="M4.5 0L8.4 4.2H5.5V6.5H3.5V4.2H0.6Z" fill="#f01020"/><path d="M4.5 13L8.4 8.8H5.5V6.5H3.5V8.8H0.6Z" fill="#108a10"/></svg></i></div>
<div class="lbl" style="left:1205px;top:590px;text-align:left">мм</div>
<div class="sep" style="top:617px"></div>
<div class="lbl" style="left:1104px;width:100px;text-align:center;top:625px">Ряд</div>
<div class="lbl" style="left:1060px;width:79px;top:645.5px">Интервал:</div>
<div class="spin" style="top:641.5px">28.21<i><svg style="position:absolute;left:2px;top:1px" width="9" height="13" viewBox="0 0 9 13"><path d="M4.5 0L8.4 4.2H5.5V6.5H3.5V4.2H0.6Z" fill="#f01020"/><path d="M4.5 13L8.4 8.8H5.5V6.5H3.5V8.8H0.6Z" fill="#108a10"/></svg></i></div>
<div class="lbl" style="left:1205px;top:645.5px;text-align:left">мм</div>
<div class="lbl" style="left:1060px;width:79px;top:675px">Сдвиг:</div>
<div class="spin" style="top:671px">0.00<i><svg style="position:absolute;left:2px;top:1px" width="9" height="13" viewBox="0 0 9 13"><path d="M4.5 0L8.4 4.2H5.5V6.5H3.5V4.2H0.6Z" fill="#f01020"/><path d="M4.5 13L8.4 8.8H5.5V6.5H3.5V8.8H0.6Z" fill="#108a10"/></svg></i></div>
<div class="lbl" style="left:1205px;top:675px;text-align:left">мм</div>
<div class="sep" style="top:702px"></div>
<div class="lbl" style="left:1060px;width:79px;top:717px">Поворот:</div>
<div class="spin" style="top:713px">0<i><svg style="position:absolute;left:2px;top:1px" width="9" height="13" viewBox="0 0 9 13"><path d="M4.5 0L8.4 4.2H5.5V6.5H3.5V4.2H0.6Z" fill="#f01020"/><path d="M4.5 13L8.4 8.8H5.5V6.5H3.5V8.8H0.6Z" fill="#108a10"/></svg></i></div>
<div class="lbl" style="left:1208px;top:715px;text-align:left">°</div>
<div class="cb" style="left:1080px;top:741.5px"></div>
<div class="lbl" style="left:1095.5px;top:742px;text-align:left;letter-spacing:0.17px">Подогнать по сетке</div>
<div class="abs" style="left:1080px;top:764px;width:13px;height:2px;background:#333;border-bottom:1px solid #fff"></div>
<div class="btn s" style="left:1070px;top:779.5px;width:21px;height:18px;line-height:16px">FX</div>
<div class="btn s" style="left:1157px;top:779.5px;width:60px;height:18px;line-height:16px">Сохранить</div>
<div class="btn s" style="left:1222px;top:779.5px;width:19px;height:18px;line-height:16px">?</div>
<!-- panel 2 -->
<div class="abs" style="left:1280px;top:37px;width:4px;height:771px;background:#5e5e5e"></div>
<div class="abs" style="left:1284px;top:60px;width:212px;height:748px;background:#f0f0f0"></div>
<div class="hdr" style="left:1284px;width:212px;padding-left:6px">Список Цвет-Объект</div>
<svg class="abs" style="left:1463px;top:42px" width="11" height="12" viewBox="0 0 11 12"><path d="M3.5 1.5H7.5M4 1.5V6.5M7 1.5V6.5M6 1.5V6.5M2 6.5H9M5.5 6.5V10.5" stroke="#fff" stroke-width="1.1" fill="none"/></svg>
<svg class="abs" style="left:1479px;top:42px" width="11" height="11" viewBox="0 0 11 11"><path d="M1.5 1.5L9.5 9.5M9.5 1.5L1.5 9.5" stroke="#fff" stroke-width="1.4" fill="none"/></svg>
<div class="abs" style="left:1288px;top:64px;width:15px;height:16px;background:#cccccc;border:1px solid #d8d8d8"><svg width="13" height="14" viewBox="0 0 13 14" style="position:absolute;left:0;top:0"><path d="M2.5 6L6.5 2.5L10.5 6M2.5 11L6.5 7.5L10.5 11" stroke="#8c8c8c" stroke-width="1" fill="none"/></svg></div>
<div class="btn" style="left:1321px;top:64px;width:78px;height:16px;font-size:11.5px;line-height:16px">Показать</div>
<div class="abs" style="left:1403.5px;top:64px;width:31.5px;height:16px;overflow:hidden;font-size:11.3px;line-height:16px;white-space:nowrap"><span style="position:absolute;left:-3.5px">Объект</span></div>
<div class="t" style="left:1440.3px;top:64px;font-size:11.3px;line-height:16px">Тип</div>
<svg class="abs" style="left:1292px;top:84px" width="196" height="716" viewBox="1292 84 196 716" shape-rendering="crispEdges">
<rect x="1292" y="84" width="196" height="716" fill="#fff"/>
<rect x="1292" y="84" width="194" height="714" fill="#696969"/>
<rect x="1294" y="86" width="192" height="712" fill="#c0c0c0"/>
<path d="M1337.5 86V798M1373.5 86V798M1405.5 86V798M1436.5 86V798M1468.5 86V798M1294 106.5H1486M1294 144.5H1486M1294 180.5H1486M1294 216.5H1486M1294 252.5H1486M1294 288.5H1486M1294 324.5H1486M1294 360.5H1486M1294 396.5H1486M1294 432.5H1486M1294 468.5H1486M1294 504.5H1486M1294 540.5H1486M1294 576.5H1486M1294 612.5H1486M1294 648.5H1486M1294 684.5H1486M1294 720.5H1486M1294 756.5H1486M1294 792.5H1486" stroke="#b5b5b5" stroke-width="1" fill="none"/>
<path d="M1304 126.5H1311M1333 126.5H1338" stroke="#000" stroke-width="1" stroke-dasharray="1 1"/>
<rect x="1312" y="116" width="20" height="20" fill="#1490d2" stroke="#0000ff" stroke-width="2"/>
<rect x="1339" y="110" width="33" height="33" fill="#c0c0c0" stroke="#0000ff" stroke-width="2"/>
<rect x="1340" y="119" width="31" height="16" fill="#1490d2"/>
<path d="M1342 126.5H1370M1345 123.5H1367M1345 129.5H1368" stroke="#d8b070" stroke-width="1" stroke-dasharray="1 5"/>
<path d="M1343 134.5H1369" stroke="#a06030" stroke-width="1" stroke-dasharray="2 4"/>
<g shape-rendering="auto" font-family="'Liberation Sans',sans-serif" font-size="12" text-anchor="middle">
<text x="1317" y="100" fill="#000">1</text><text x="1389" y="100" fill="#000">1</text><text x="1389" y="131" fill="#000">1</text><text x="1322" y="131" fill="#fff">2</text>
<path d="M1421 116.5a9.5 9.5 0 1 0 8.6 13.5h-4.6a3.6 3.6 0 0 1 0-7.2h5a9.5 9.5 0 0 0-9-6.3z" fill="#f4f8fc" stroke="#505050" stroke-width="1.2"/>
<path d="M1420 116V136" stroke="#ee2020" stroke-width="1.6"/>
<path d="M1413.5 118.3l2.4 2.4l-2.4 2.4l-2.4-2.4z" fill="#d8f0d8" stroke="#208020" stroke-width="1"/>
<path d="M1424 132.5h6M1427 129.8v5.4" stroke="#e01020" stroke-width="1.8"/>
<path d="M1445 121.5H1459M1445 125.5H1459M1445 129.5H1459M1447.7 119V132M1451.8 119V132M1455.9 119V132" stroke="#ff0000" stroke-width="2"/>
</g>
</svg>
<!-- bottom -->
<div class="abs" style="left:0;top:808px;width:1496px;height:1px;background:#555"></div>
<div class="abs" style="left:0;top:809px;width:1496px;height:5px;background:#c0c0c0"></div>
</body></html>
